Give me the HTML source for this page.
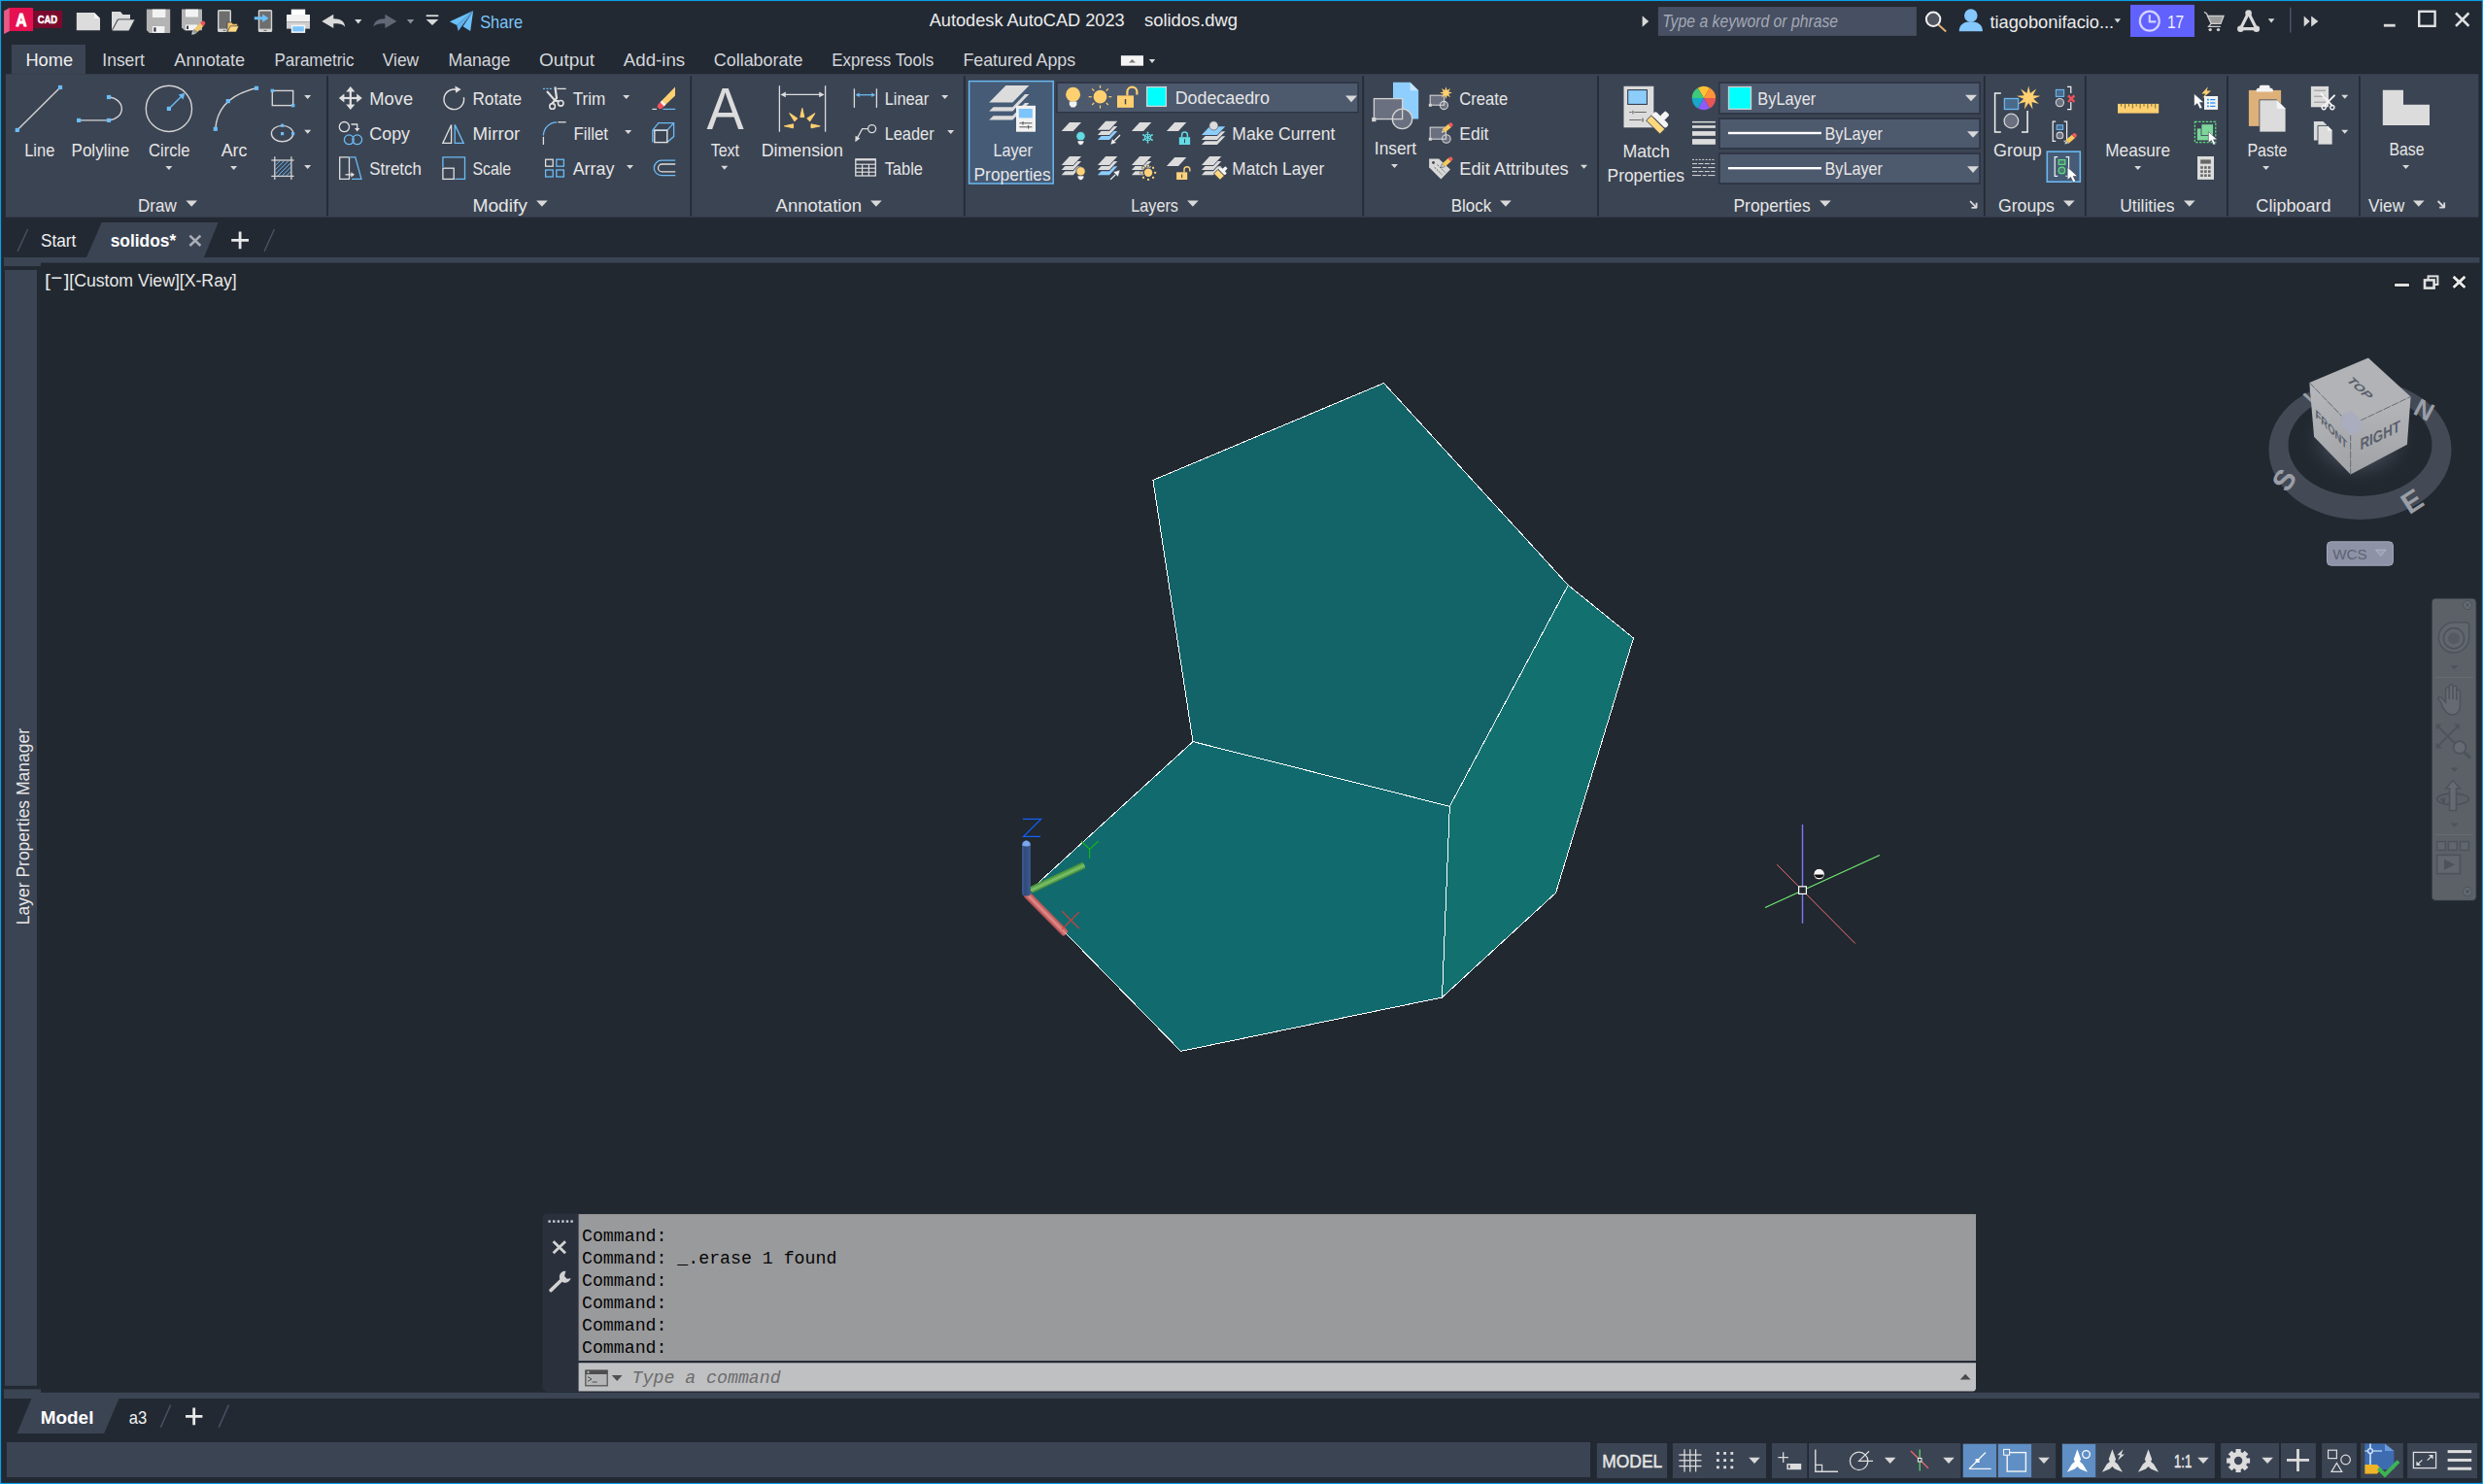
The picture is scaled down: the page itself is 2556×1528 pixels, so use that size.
<!DOCTYPE html>
<html lang="en"><head><meta charset="utf-8"><title>Autodesk AutoCAD 2023 - solidos.dwg</title>
<style>
html,body{margin:0;padding:0;background:#222933;overflow:hidden}
body{width:2556px;height:1528px;font-family:"Liberation Sans",sans-serif}
svg{display:block;font-family:"Liberation Sans",sans-serif}
</style></head><body>
<svg width="2556" height="1528" viewBox="0 0 2556 1528">
<rect x="0" y="0" width="2556" height="1528" fill="#08a0e8"/>
<rect x="1.15" y="1.1" width="2553.7" height="1525.75" fill="#282329"/>
<rect x="2.1" y="2.1" width="2551.8" height="1523.8" fill="#222933"/>
<rect x="5.8" y="76.2" width="2545.6" height="147.5" fill="#3b4453"/>
<g id="titlebar"><path d="M4.06 11.3L9.9 8.1V31.9L4.06 35.05z" fill="#e85a85"/>
<rect x="9.86" y="7.95" width="24.21" height="24.05" fill="#e61050"/>
<rect x="34.07" y="11" width="30.01" height="17.8" fill="#7a0a2c"/>
<text x="16.3" y="26.7" font-size="18.8" fill="#ffffff" textLength="11.3" lengthAdjust="spacingAndGlyphs" font-weight="bold" stroke="#ffffff" stroke-width="0.8" stroke-linejoin="round">A</text>
<text x="38.7" y="23.8" font-size="10.5" fill="#ffffff" textLength="20.45" lengthAdjust="spacingAndGlyphs" font-weight="bold" stroke="#ffffff" stroke-width="0.45" stroke-linejoin="round">CAD</text>
<path d="M78.8 12.9H97l6 6V31.2H78.8z" fill="#dcdcdc"/>
<path d="M97 12.9l6 6h-6z" fill="#f4f4f4"/>
<path d="M115 31.9V12H124l2.5 3H134v5h-13z" fill="#dcdcdc"/>
<path d="M115 31.9l6.5-12H139l-6.3 12z" fill="#dcdcdc" stroke="#222933" stroke-width="0.8"/>
<path d="M150.9 9.6h24.3v24.3h-21.3l-3-3z" fill="#b4b4b4"/><rect x="156.9" y="9.6" width="13.5" height="8.4" fill="#f2f2f2"/><rect x="156.9" y="27" width="12.5" height="6.9" fill="#f2f2f2"/><rect x="158.4" y="28.3" width="2.1" height="4.3" fill="#2a2f3a"/>
<path d="M187 9.6h21v21.6h-18l-3-3z" fill="#b4b4b4"/><rect x="191" y="9.6" width="13" height="7.9" fill="#f2f2f2"/><rect x="191" y="25.4" width="12" height="5.8" fill="#f2f2f2"/><rect x="192.2" y="26.6" width="1.8" height="3.4" fill="#2a2f3a"/><g transform="translate(199.6 33.4) rotate(-45)"><rect x="0" y="-2.3" width="3" height="4.6" fill="#9a9a9a"/><path d="M0 -2.3L-3.4 0L0 2.3z" fill="#c8c8c8"/><rect x="3" y="-2.3" width="8.5" height="4.6" fill="#f2c66d"/><path d="M11.5 -2.3h1.8a2.3 2.3 0 0 1 0 4.6h-1.8z" fill="#f0525a"/></g>
<rect x="224" y="10" width="14" height="23" fill="#d4d4d4" rx="1.6"/>
<rect x="225.4" y="11.6" width="11.2" height="18" fill="#6e6e6e"/>
<rect x="229.6" y="30.9" width="2.8" height="1" fill="#6e6e6e"/>
<path d="M234 33V23h4.5l1.2 1.6H244.5V27z" fill="#f2c66d" stroke="#222933" stroke-width="0.6"/>
<path d="M234 33l3.2-6.2H246l-3 6.2z" fill="#ffd987" stroke="#222933" stroke-width="0.6"/>
<rect x="265.8" y="10" width="14.4" height="23" fill="#d4d4d4" rx="1.6"/>
<rect x="267.2" y="11.6" width="11.6" height="18" fill="#6e6e6e"/>
<rect x="271.5" y="30.9" width="3" height="1" fill="#6e6e6e"/>
<path d="M261.8 17.3h8.4v-2.8l6.4 4.3l-6.4 4.3v-2.8h-8.4z" fill="#6cc0fa"/>
<rect x="299.8" y="9.6" width="14.4" height="8.4" fill="#ffffff"/>
<rect x="295" y="15" width="24" height="7.5" fill="#f2f2f2"/>
<rect x="295" y="22.5" width="24" height="7.1" fill="#cfcfcf"/>
<rect x="299.8" y="25.6" width="14.4" height="8.3" fill="#f6f6f6"/>
<rect x="301.2" y="27.2" width="11.6" height="5.2" fill="#7cc4fa"/>
<path d="M331.3 22l12-7.2v4.4c8 0 11.6 3.4 11.9 8.6c-2.4-3-5.6-3.6-11.9-3.4v4.6z" fill="#d9d9d9"/>
<path d="M365.15 20h7.3l-3.65 4.6z" fill="#d9d9d9"/>
<path d="M408.4 22l-12-7.2v4.4c-8 0-11.6 3.4-11.9 8.6c2.4-3 5.6-3.6 11.9-3.4v4.6z" fill="#626876"/>
<path d="M418.95 20h7.3l-3.65 4.6z" fill="#8a8f99"/>
<rect x="438.7" y="15.3" width="12.6" height="1.8" fill="#d9d9d9"/>
<path d="M438.7 20H451.3L445 25.9z" fill="#d9d9d9"/>
<path d="M462.9 22.2L487.2 10.9L470.3 25.9z" fill="#6cc0fa"/>
<path d="M470.3 25.9L487.2 10.9L471.7 31.9z" fill="#5fb2ee"/>
<path d="M476.6 27.3L487.2 10.9L484.2 31.9z" fill="#6cc0fa"/>
<text x="494.15" y="28.6" font-size="18.6" fill="#7cc4f8" textLength="43.9" lengthAdjust="spacingAndGlyphs">Share</text>
<text x="956.75" y="27.3" font-size="18.6" fill="#ececec" textLength="200.9" lengthAdjust="spacingAndGlyphs">Autodesk AutoCAD 2023</text>
<text x="1178.05" y="27.3" font-size="18.6" fill="#ececec" textLength="96" lengthAdjust="spacingAndGlyphs">solidos.dwg</text>
<path d="M1690.6 16.3L1697.2 22L1690.6 27.8z" fill="#d9d9d9"/>
<rect x="1706.9" y="7.1" width="266" height="29.8" fill="#474f62"/>
<text x="1711.15" y="27.8" font-size="17.6" fill="#a3a9b5" textLength="181" lengthAdjust="spacingAndGlyphs" font-style="italic">Type a keyword or phrase</text>
<line x1="1995" y1="25" x2="2003.2" y2="32.6" stroke="#e0b070" stroke-width="2"/>
<circle cx="1990.1" cy="19.8" r="7.2" fill="#50555f" stroke="#f2f2f2" stroke-width="2"/>
<circle cx="2028.8" cy="16" r="6.8" fill="#84c8ff"/>
<path d="M2016.7 32.2c0-7 5-10 12.1-10s12.1 3 12.1 10z" fill="#84c8ff"/>
<text x="2048.45" y="28.7" font-size="18.6" fill="#ececec" textLength="127.7" lengthAdjust="spacingAndGlyphs">tiagobonifacio...</text>
<path d="M2176.5 19.2h6.6l-3.3 4.2z" fill="#d9d9d9"/>
<rect x="2193" y="4.9" width="66" height="33.1" fill="#6161fd"/>
<circle cx="2212.8" cy="21.7" r="10" fill="none" stroke="#d2d2ff" stroke-width="2.2"/>
<path d="M2212.8 15.2V22.4H2219.4" fill="none" stroke="#d2d2ff" stroke-width="2.2"/>
<text x="2230.95" y="28.5" font-size="18.6" fill="#f0f0ff" textLength="17.3" lengthAdjust="spacingAndGlyphs">17</text>
<path d="M2269 12.4Q2272 13.4 2273 16.8" fill="none" stroke="#cfcfcf" stroke-width="1.2"/>
<path d="M2272.4 16.4H2289L2286 24.4H2276.2z" fill="#9a9a9a" stroke="#cfcfcf" stroke-width="1.3"/>
<path d="M2276.2 24.4L2273.6 27.3H2285.8" fill="none" stroke="#cfcfcf" stroke-width="1.3"/>
<circle cx="2275.2" cy="30.6" r="1.7" fill="#cfcfcf"/><circle cx="2283.5" cy="30.6" r="1.7" fill="#cfcfcf"/>
<path d="M2306.4 29.6L2314.6 13.2L2322.8 29.6z" fill="none" stroke="#d9d9d9" stroke-width="3.2" stroke-linejoin="round"/>
<circle cx="2306.4" cy="29.8" r="3.3" fill="#d9d9d9"/><circle cx="2322.8" cy="29.8" r="3.3" fill="#d9d9d9"/><circle cx="2314.6" cy="13.6" r="3.3" fill="#d9d9d9"/>
<path d="M2334.8 19.2h6.6l-3.3 4.2z" fill="#d9d9d9"/>
<line x1="2357.8" y1="7.8" x2="2357.8" y2="33.6" stroke="#4a5365" stroke-width="1.6"/>
<path d="M2371.7 16.6l6 5.4l-6 5.4zM2379.2 16.6l7.2 5.4l-7.2 5.4z" fill="#d9d9d9"/>
<rect x="2453.9" y="24.8" width="11.8" height="2.8" fill="#d9d9d9"/>
<rect x="2490.2" y="11.8" width="16.4" height="15" fill="none" stroke="#e0e0e0" stroke-width="2.4"/>
<path d="M2528 13.4L2541.4 26.8M2541.4 13.4L2528 26.8" fill="none" stroke="#e0e0e0" stroke-width="2.6"/></g>
<g id="ribbon-tabs"><rect x="11.8" y="46" width="76.2" height="30.2" fill="#3b4453"/>
<text x="26.45" y="67.6" font-size="18.6" fill="#f0f0f0" textLength="48.6" lengthAdjust="spacingAndGlyphs">Home</text>
<text x="105.35" y="67.6" font-size="18.6" fill="#d4d6da" textLength="43.6" lengthAdjust="spacingAndGlyphs">Insert</text>
<text x="179.25" y="67.6" font-size="18.6" fill="#d4d6da" textLength="72.9" lengthAdjust="spacingAndGlyphs">Annotate</text>
<text x="282.45" y="67.6" font-size="18.6" fill="#d4d6da" textLength="82.2" lengthAdjust="spacingAndGlyphs">Parametric</text>
<text x="393.75" y="67.6" font-size="18.6" fill="#d4d6da" textLength="37.4" lengthAdjust="spacingAndGlyphs">View</text>
<text x="461.45" y="67.6" font-size="18.6" fill="#d4d6da" textLength="63.9" lengthAdjust="spacingAndGlyphs">Manage</text>
<text x="555.05" y="67.6" font-size="18.6" fill="#d4d6da" textLength="57.1" lengthAdjust="spacingAndGlyphs">Output</text>
<text x="641.85" y="67.6" font-size="18.6" fill="#d4d6da" textLength="63.3" lengthAdjust="spacingAndGlyphs">Add-ins</text>
<text x="734.85" y="67.6" font-size="18.6" fill="#d4d6da" textLength="91.5" lengthAdjust="spacingAndGlyphs">Collaborate</text>
<text x="856.15" y="67.6" font-size="18.6" fill="#d4d6da" textLength="105" lengthAdjust="spacingAndGlyphs">Express Tools</text>
<text x="991.45" y="67.6" font-size="18.6" fill="#d4d6da" textLength="115.7" lengthAdjust="spacingAndGlyphs">Featured Apps</text>
<rect x="1153.9" y="57.2" width="23.1" height="10.5" fill="#f4f4f4"/>
<path d="M1162 64.6h7l-3.5-3.6z" fill="#7a7a7a"/>
<path d="M1182.8 61.1h6.4l-3.2 3.8z" fill="#d9d9d9"/></g>
<g id="ribbon"><rect x="336.1" y="78" width="1.8" height="144.6" fill="#252b36"/>
<rect x="710.3" y="78" width="1.8" height="144.6" fill="#252b36"/>
<rect x="991.9" y="78" width="1.8" height="144.6" fill="#252b36"/>
<rect x="1402.3" y="78" width="1.8" height="144.6" fill="#252b36"/>
<rect x="1644.1" y="78" width="1.8" height="144.6" fill="#252b36"/>
<rect x="2041.9" y="78" width="1.8" height="144.6" fill="#252b36"/>
<rect x="2145.9" y="78" width="1.8" height="144.6" fill="#252b36"/>
<rect x="2292.1" y="78" width="1.8" height="144.6" fill="#252b36"/>
<rect x="2428" y="78" width="1.8" height="144.6" fill="#252b36"/><text x="142.05" y="217.8" font-size="18.6" fill="#e6e6e6" textLength="39.7" lengthAdjust="spacingAndGlyphs">Draw</text>
<path d="M191.4 206.6h11.6l-5.8 6.2z" fill="#d9d9d9"/>
<text x="486.45" y="217.8" font-size="18.6" fill="#e6e6e6" textLength="56.5" lengthAdjust="spacingAndGlyphs">Modify</text>
<path d="M552.1 206.6h11.6l-5.8 6.2z" fill="#d9d9d9"/>
<text x="798.55" y="217.8" font-size="18.6" fill="#e6e6e6" textLength="88.4" lengthAdjust="spacingAndGlyphs">Annotation</text>
<path d="M896.1 206.6h11.6l-5.8 6.2z" fill="#d9d9d9"/>
<text x="1164.35" y="217.8" font-size="18.6" fill="#e6e6e6" textLength="48.5" lengthAdjust="spacingAndGlyphs">Layers</text>
<path d="M1222.1 206.6h11.6l-5.8 6.2z" fill="#d9d9d9"/>
<text x="1493.65" y="217.8" font-size="18.6" fill="#e6e6e6" textLength="41.5" lengthAdjust="spacingAndGlyphs">Block</text>
<path d="M1544.2 206.6h11.6l-5.8 6.2z" fill="#d9d9d9"/>
<text x="1784.55" y="217.8" font-size="18.6" fill="#e6e6e6" textLength="79.1" lengthAdjust="spacingAndGlyphs">Properties</text>
<path d="M1873.1 206.6h11.6l-5.8 6.2z" fill="#d9d9d9"/>
<text x="2056.95" y="217.8" font-size="18.6" fill="#e6e6e6" textLength="58" lengthAdjust="spacingAndGlyphs">Groups</text>
<path d="M2124 206.6h11.6l-5.8 6.2z" fill="#d9d9d9"/>
<text x="2182.25" y="217.8" font-size="18.6" fill="#e6e6e6" textLength="56.2" lengthAdjust="spacingAndGlyphs">Utilities</text>
<path d="M2248 206.6h11.6l-5.8 6.2z" fill="#d9d9d9"/>
<text x="2322.35" y="217.8" font-size="18.6" fill="#e6e6e6" textLength="77.3" lengthAdjust="spacingAndGlyphs">Clipboard</text>
<text x="2438.05" y="217.8" font-size="18.6" fill="#e6e6e6" textLength="37.1" lengthAdjust="spacingAndGlyphs">View</text>
<path d="M2484 206.6h11.6l-5.8 6.2z" fill="#d9d9d9"/>
<path d="M2028 207.2l6 6M2034.6 214.1v-5.4M2034.9 213.8h-5.4" fill="none" stroke="#d9d9d9" stroke-width="1.8"/>
<path d="M2509.6 207l6 6M2516.2 213.9v-5.4M2516.5 213.6h-5.4" fill="none" stroke="#d9d9d9" stroke-width="1.8"/><line x1="17.8" y1="133.9" x2="62" y2="90" stroke="#d4d4d4" stroke-width="1.4"/>
<rect x="15.7" y="131.8" width="4.2" height="4.2" fill="#6bbcf5"/><rect x="59.9" y="87.9" width="4.2" height="4.2" fill="#6bbcf5"/>
<text x="25.25" y="160.8" font-size="18.6" fill="#e6e6e6" textLength="31" lengthAdjust="spacingAndGlyphs">Line</text>
<path d="M81.1 123.9H112A14.7 12 0 0 0 112 100" fill="none" stroke="#d4d4d4" stroke-width="1.4"/>
<rect x="79" y="121.8" width="4.2" height="4.2" fill="#6bbcf5"/><rect x="109.9" y="121.8" width="4.2" height="4.2" fill="#6bbcf5"/><rect x="109.9" y="97.9" width="4.2" height="4.2" fill="#6bbcf5"/>
<text x="73.55" y="160.8" font-size="18.6" fill="#e6e6e6" textLength="59.6" lengthAdjust="spacingAndGlyphs">Polyline</text>
<circle cx="173.9" cy="111.9" r="23.6" fill="none" stroke="#d4d4d4" stroke-width="1.4"/>
<line x1="173.9" y1="111.9" x2="187.5" y2="98.5" stroke="#6bbcf5" stroke-width="1.4"/>
<path d="M190.2 95.8L188.6 102.4L183.7 97.4z" fill="#6bbcf5"/>
<rect x="171.8" y="109.8" width="4.2" height="4.2" fill="#6bbcf5"/>
<text x="153.05" y="160.8" font-size="18.6" fill="#e6e6e6" textLength="42.4" lengthAdjust="spacingAndGlyphs">Circle</text>
<path d="M170.4 170.9h7l-3.5 4z" fill="#d9d9d9"/>
<path d="M221.8 132.8Q224 100 264 90.8" fill="none" stroke="#d4d4d4" stroke-width="1.4"/>
<rect x="219.7" y="130.7" width="4.2" height="4.2" fill="#6bbcf5"/><rect x="232.7" y="102" width="4.2" height="4.2" fill="#6bbcf5"/><rect x="261.9" y="88.7" width="4.2" height="4.2" fill="#6bbcf5"/>
<text x="227.65" y="160.8" font-size="18.6" fill="#e6e6e6" textLength="26.7" lengthAdjust="spacingAndGlyphs">Arc</text>
<path d="M237.1 170.9h7l-3.5 4z" fill="#d9d9d9"/>
<rect x="280.3" y="93.4" width="21.4" height="15.2" fill="none" stroke="#d4d4d4" stroke-width="1.4"/>
<rect x="278.6" y="91.7" width="3.4" height="3.4" fill="#6bbcf5"/><rect x="300" y="106.9" width="3.4" height="3.4" fill="#6bbcf5"/>
<path d="M313.2 98h7l-3.5 4z" fill="#d9d9d9"/>
<ellipse cx="290.6" cy="137.6" rx="11.2" ry="8.2" fill="none" stroke="#d4d4d4" stroke-width="1.4"/>
<rect x="289" y="127.6" width="3.2" height="3.2" fill="#6bbcf5"/><rect x="289" y="136" width="3.2" height="3.2" fill="#6bbcf5"/><rect x="300" y="136" width="3.2" height="3.2" fill="#6bbcf5"/>
<path d="M313.2 133.8h7l-3.5 4z" fill="#d9d9d9"/>
<clipPath id="hc"><rect x="283.5" y="165.7" width="15.7" height="15"/></clipPath>
<g clip-path="url(#hc)"><line x1="267.4" y1="182" x2="284.4" y2="165" stroke="#6bbcf5" stroke-width="1"/><line x1="271.8" y1="182" x2="288.8" y2="165" stroke="#6bbcf5" stroke-width="1"/><line x1="276.2" y1="182" x2="293.2" y2="165" stroke="#6bbcf5" stroke-width="1"/><line x1="280.6" y1="182" x2="297.6" y2="165" stroke="#6bbcf5" stroke-width="1"/><line x1="285" y1="182" x2="302" y2="165" stroke="#6bbcf5" stroke-width="1"/><line x1="289.4" y1="182" x2="306.4" y2="165" stroke="#6bbcf5" stroke-width="1"/><line x1="293.8" y1="182" x2="310.8" y2="165" stroke="#6bbcf5" stroke-width="1"/><line x1="298.2" y1="182" x2="315.2" y2="165" stroke="#6bbcf5" stroke-width="1"/><line x1="302.6" y1="182" x2="319.6" y2="165" stroke="#6bbcf5" stroke-width="1"/><line x1="307" y1="182" x2="324" y2="165" stroke="#6bbcf5" stroke-width="1"/><line x1="311.4" y1="182" x2="328.4" y2="165" stroke="#6bbcf5" stroke-width="1"/></g>
<line x1="279.3" y1="165" x2="302.6" y2="165" stroke="#d4d4d4" stroke-width="1.3"/><line x1="279.3" y1="181.4" x2="302.6" y2="181.4" stroke="#d4d4d4" stroke-width="1.3"/><line x1="282.8" y1="161.2" x2="282.8" y2="184.9" stroke="#d4d4d4" stroke-width="1.3"/><line x1="299.9" y1="161.2" x2="299.9" y2="184.9" stroke="#d4d4d4" stroke-width="1.3"/>
<path d="M313.2 169.9h7l-3.5 4z" fill="#d9d9d9"/><line x1="352.8" y1="101" x2="368.8" y2="101" stroke="#e0e0e0" stroke-width="2.2"/><line x1="360.8" y1="93" x2="360.8" y2="109" stroke="#e0e0e0" stroke-width="2.2"/>
<path d="M360.8 89l-4.6 5.6h9.2zM360.8 113l-4.6 -5.6h9.2zM348.8 101l5.6 -4.6v9.2zM372.8 101l-5.6 -4.6v9.2z" fill="#e0e0e0"/>
<text x="380.35" y="107.8" font-size="18.6" fill="#e6e6e6" textLength="44.8" lengthAdjust="spacingAndGlyphs">Move</text>
<circle cx="354.4" cy="130.6" r="5.1" fill="none" stroke="#e0e0e0" stroke-width="1.3"/>
<circle cx="359.3" cy="143.8" r="4.9" fill="none" stroke="#6bbcf5" stroke-width="1.3"/><circle cx="367.7" cy="143.8" r="4.9" fill="none" stroke="#6bbcf5" stroke-width="1.3"/>
<path d="M361.5 128H367.7V133" fill="none" stroke="#e0e0e0" stroke-width="1.3"/>
<path d="M365 132l2.7 3.6l2.7-3.6z" fill="#e0e0e0"/>
<text x="380.35" y="143.8" font-size="18.6" fill="#e6e6e6" textLength="41.7" lengthAdjust="spacingAndGlyphs">Copy</text>
<path d="M359.5 161.9H349.7V184.3H359.5V161.9" fill="none" stroke="#e0e0e0" stroke-width="1.3"/>
<path d="M359.5 161.9H365.8L372 184.3H362" fill="none" stroke="#6bbcf5" stroke-width="1.3"/>
<line x1="355.5" y1="179.8" x2="362" y2="179.8" stroke="#e0e0e0" stroke-width="1.3"/><path d="M361.4 177.2l3.6 2.6l-3.6 2.6z" fill="#e0e0e0"/>
<text x="380.35" y="180.1" font-size="18.6" fill="#e6e6e6" textLength="53.5" lengthAdjust="spacingAndGlyphs">Stretch</text>
<path d="M469.8 92.3A10.3 10.3 0 1 0 477.4 100.2" fill="none" stroke="#e0e0e0" stroke-width="1.4"/>
<path d="M468.4 88.6l6.2 3.4l-5.4 3.8z" fill="#e0e0e0"/>
<text x="486.45" y="107.8" font-size="18.6" fill="#e6e6e6" textLength="50.7" lengthAdjust="spacingAndGlyphs">Rotate</text>
<path d="M464.6 128.4V147.4H455.8z" fill="none" stroke="#e0e0e0" stroke-width="1.3"/>
<path d="M468.2 128.4V147.4H477.2z" fill="none" stroke="#6bbcf5" stroke-width="1.3"/>
<text x="486.45" y="143.8" font-size="18.6" fill="#e6e6e6" textLength="48.9" lengthAdjust="spacingAndGlyphs">Mirror</text>
<path d="M455.9 172V161.8H478.5V184.4H468.4" fill="none" stroke="#6bbcf5" stroke-width="1.3"/>
<rect x="455.9" y="173.2" width="11.3" height="11.2" fill="none" stroke="#e0e0e0" stroke-width="1.3"/>
<text x="486.45" y="180.1" font-size="18.6" fill="#e6e6e6" textLength="39.7" lengthAdjust="spacingAndGlyphs">Scale</text>
<line x1="559" y1="91.4" x2="569" y2="91.4" stroke="#6bbcf5" stroke-width="1.3" stroke-dasharray="2 1.4"/><line x1="573.5" y1="91.4" x2="582.7" y2="91.4" stroke="#e0e0e0" stroke-width="1.3"/>
<path d="M571.4 89.5L573 101L568.4 106.6M563 94L571.4 103.6L575.2 104.4" fill="none" stroke="#e0e0e0" stroke-width="2.2"/>
<circle cx="568.6" cy="109.4" r="2.8" fill="none" stroke="#e0e0e0" stroke-width="1.6"/><circle cx="577.2" cy="106.3" r="2.8" fill="none" stroke="#e0e0e0" stroke-width="1.6"/>
<text x="589.65" y="107.8" font-size="18.6" fill="#e6e6e6" textLength="33.7" lengthAdjust="spacingAndGlyphs">Trim</text><path d="M641.2 98h7l-3.5 4z" fill="#d9d9d9"/>
<path d="M573.2 125.8A14 14 0 0 0 559.4 139.6" fill="none" stroke="#6bbcf5" stroke-width="1.3"/>
<line x1="574.4" y1="125.8" x2="582.7" y2="125.8" stroke="#e0e0e0" stroke-width="1.3"/><line x1="559.4" y1="140.8" x2="559.4" y2="149" stroke="#e0e0e0" stroke-width="1.3"/>
<text x="590.45" y="143.8" font-size="18.6" fill="#e6e6e6" textLength="35.6" lengthAdjust="spacingAndGlyphs">Fillet</text><path d="M643.2 134h7l-3.5 4z" fill="#d9d9d9"/>
<rect x="561.6" y="164.2" width="7.6" height="7" fill="none" stroke="#e0e0e0" stroke-width="1.3"/><rect x="572.8" y="164.2" width="7.6" height="7" fill="none" stroke="#6bbcf5" stroke-width="1.3"/><rect x="561.6" y="175" width="7.6" height="7" fill="none" stroke="#6bbcf5" stroke-width="1.3"/><rect x="572.8" y="175" width="7.6" height="7" fill="none" stroke="#6bbcf5" stroke-width="1.3"/>
<text x="589.65" y="180.1" font-size="18.6" fill="#e6e6e6" textLength="42.8" lengthAdjust="spacingAndGlyphs">Array</text><path d="M645 170.1h7l-3.5 4z" fill="#d9d9d9"/>
<path d="M695 89.6L680.6 104.2L684.4 108.4L695 98.4z" fill="#ffd070"/>
<path d="M680.6 104.2L677.4 107.4A3 3 0 0 0 681.6 111.6L684.6 108.4z" fill="#f0525a"/>
<path d="M681.4 103.4L685.4 107.6L683.6 109.4L679.6 105.2z" fill="#f4f4f4"/>
<line x1="671.4" y1="112.4" x2="676" y2="112.4" stroke="#e0e0e0" stroke-width="1.2"/><line x1="682.5" y1="112.4" x2="695.2" y2="112.4" stroke="#6bbcf5" stroke-width="1.2"/>
<path d="M671.8 134.2L677.8 126.6H693.6L693.6 140.6L686.8 146.6" fill="none" stroke="#6bbcf5" stroke-width="1.3"/><path d="M693.6 126.6L686.8 134.2H671.8" fill="none" stroke="#6bbcf5" stroke-width="1.3"/>
<rect x="673.8" y="134.2" width="13" height="12.4" fill="none" stroke="#e0e0e0" stroke-width="1.4"/>
<line x1="671.8" y1="134.2" x2="671.8" y2="146.6" stroke="#6bbcf5" stroke-width="1.3"/>
<path d="M695.2 165.2H681A7.7 7.7 0 0 0 681 180.6H695.2" fill="none" stroke="#6bbcf5" stroke-width="1.3"/>
<path d="M695.2 169H681.4A3.9 3.9 0 0 0 681.4 176.8H695.2" fill="none" stroke="#e0e0e0" stroke-width="1.3"/><text x="727.4" y="132.9" font-size="60.4" fill="#dcdcdc" textLength="38.2" lengthAdjust="spacingAndGlyphs">A</text>
<text x="731.65" y="160.6" font-size="18.6" fill="#e6e6e6" textLength="29.3" lengthAdjust="spacingAndGlyphs">Text</text><path d="M742.3 170.7h7l-3.5 4z" fill="#d9d9d9"/>
<line x1="802.4" y1="88.2" x2="802.4" y2="135.7" stroke="#dcdcdc" stroke-width="1.3"/><line x1="849.6" y1="88.2" x2="849.6" y2="135.7" stroke="#dcdcdc" stroke-width="1.3"/><line x1="807" y1="97.4" x2="845" y2="97.4" stroke="#dcdcdc" stroke-width="1.3"/>
<path d="M803.4 97.4l5.4-2.8v5.6zM848.6 97.4l-5.4-2.8v5.6z" fill="#dcdcdc"/>
<path d="M-2 -9.2L0 -18.4L2 -9.2z" fill="#ffd070" stroke="#ffd070" stroke-width="1" stroke-linejoin="round" transform="translate(825.8 129.8) rotate(-90)"/>
<path d="M-2 -9.2L0 -18.4L2 -9.2z" fill="#ffd070" stroke="#ffd070" stroke-width="1" stroke-linejoin="round" transform="translate(825.8 129.8) rotate(-45)"/>
<path d="M-2 -9.2L0 -18.4L2 -9.2z" fill="#ffd070" stroke="#ffd070" stroke-width="1" stroke-linejoin="round" transform="translate(825.8 129.8) rotate(0)"/>
<path d="M-2 -9.2L0 -18.4L2 -9.2z" fill="#ffd070" stroke="#ffd070" stroke-width="1" stroke-linejoin="round" transform="translate(825.8 129.8) rotate(45)"/>
<path d="M-2 -9.2L0 -18.4L2 -9.2z" fill="#ffd070" stroke="#ffd070" stroke-width="1" stroke-linejoin="round" transform="translate(825.8 129.8) rotate(90)"/>
<text x="783.65" y="160.6" font-size="18.6" fill="#e6e6e6" textLength="84.2" lengthAdjust="spacingAndGlyphs">Dimension</text>
<line x1="879.4" y1="91.3" x2="879.4" y2="110.9" stroke="#dcdcdc" stroke-width="1.3"/><line x1="902.4" y1="91.3" x2="902.4" y2="110.9" stroke="#dcdcdc" stroke-width="1.3"/><line x1="883" y1="97.7" x2="899" y2="97.7" stroke="#6bbcf5" stroke-width="1.3"/>
<path d="M880.6 97.7l4-2.2v4.4zM901.2 97.7l-4-2.2v4.4z" fill="#6bbcf5"/>
<text x="910.65" y="107.8" font-size="18.6" fill="#e6e6e6" textLength="45.5" lengthAdjust="spacingAndGlyphs">Linear</text><path d="M969.1 98h7l-3.5 4z" fill="#d9d9d9"/>
<circle cx="897.6" cy="132.6" r="4" fill="none" stroke="#dcdcdc" stroke-width="1.3"/>
<path d="M893.6 132.6H887.6L882.6 142" fill="none" stroke="#dcdcdc" stroke-width="1.3"/>
<path d="M880.3 146.2L880.6 139.8L885.4 142.4z" fill="#dcdcdc"/>
<text x="910.65" y="143.8" font-size="18.6" fill="#e6e6e6" textLength="51" lengthAdjust="spacingAndGlyphs">Leader</text><path d="M975.2 134h7l-3.5 4z" fill="#d9d9d9"/>
<rect x="880.8" y="163.8" width="20.5" height="17.2" fill="none" stroke="#dcdcdc" stroke-width="1.3"/>
<rect x="880.8" y="163.8" width="20.5" height="1.6" fill="#dcdcdc"/>
<line x1="880.8" y1="169.2" x2="901.3" y2="169.2" stroke="#dcdcdc" stroke-width="1.2"/>
<line x1="880.8" y1="173.2" x2="901.3" y2="173.2" stroke="#dcdcdc" stroke-width="1.2"/>
<line x1="880.8" y1="177.2" x2="901.3" y2="177.2" stroke="#dcdcdc" stroke-width="1.2"/>
<line x1="887.6" y1="169.2" x2="887.6" y2="181" stroke="#dcdcdc" stroke-width="1.2"/>
<line x1="894.4" y1="169.2" x2="894.4" y2="181" stroke="#dcdcdc" stroke-width="1.2"/>
<text x="910.65" y="180.1" font-size="18.6" fill="#e6e6e6" textLength="39.3" lengthAdjust="spacingAndGlyphs">Table</text><rect x="997.6" y="83.6" width="86.6" height="105.4" fill="#455b76" stroke="#6ab8f0" stroke-width="1.5"/>
<path d="M1018.2 105.6H1042.4L1059.4 88H1035.4z" fill="#dcdcdc"/>
<path d="M1018.2 114.6H1042.4L1059.4 97H1055L1042.4 110.2H1022.6z" fill="#dcdcdc"/>
<path d="M1018.2 123.6H1042.4L1059.4 106H1055L1042.4 119.2H1022.6z" fill="#dcdcdc"/>
<rect x="1046" y="108.8" width="20" height="26.9" fill="#f2f2f2"/>
<rect x="1048.8" y="112" width="14" height="9.4" fill="#7cc4fa"/>
<line x1="1049.4" y1="126.8" x2="1062.4" y2="126.8" stroke="#555" stroke-width="1"/><line x1="1049.4" y1="130.8" x2="1062.4" y2="130.8" stroke="#555" stroke-width="1"/><line x1="1053" y1="125" x2="1053" y2="128.6" stroke="#555" stroke-width="1"/><line x1="1058.6" y1="129" x2="1058.6" y2="132.6" stroke="#555" stroke-width="1"/>
<text x="1022.45" y="160.6" font-size="18.6" fill="#e6e6e6" textLength="40.5" lengthAdjust="spacingAndGlyphs">Layer</text>
<text x="1002.55" y="185.5" font-size="18.6" fill="#e6e6e6" textLength="79.1" lengthAdjust="spacingAndGlyphs">Properties</text>
<rect x="1086.9" y="84.2" width="312.1" height="32.3" fill="#2e3645"/>
<rect x="1088.7" y="86" width="308.6" height="29" fill="#4d596d"/>
<circle cx="1104.6" cy="97.3" r="7.5" fill="#ffd070"/>
<path d="M1100.8 104.4h7.6v3.6l-2 2.6h-3.6l-2-2.6z" fill="#f2f2f2"/>
<circle cx="1132.5" cy="99.7" r="6.9" fill="#ffd070"/>
<line x1="1141.3" y1="99.7" x2="1144.3" y2="99.7" stroke="#ffd070" stroke-width="1.2"/>
<line x1="1138.72" y1="105.92" x2="1140.84" y2="108.04" stroke="#ffd070" stroke-width="1.2"/>
<line x1="1132.5" y1="108.5" x2="1132.5" y2="111.5" stroke="#ffd070" stroke-width="1.2"/>
<line x1="1126.28" y1="105.92" x2="1124.16" y2="108.04" stroke="#ffd070" stroke-width="1.2"/>
<line x1="1123.7" y1="99.7" x2="1120.7" y2="99.7" stroke="#ffd070" stroke-width="1.2"/>
<line x1="1126.28" y1="93.48" x2="1124.16" y2="91.36" stroke="#ffd070" stroke-width="1.2"/>
<line x1="1132.5" y1="90.9" x2="1132.5" y2="87.9" stroke="#ffd070" stroke-width="1.2"/>
<line x1="1138.72" y1="93.48" x2="1140.84" y2="91.36" stroke="#ffd070" stroke-width="1.2"/>
<rect x="1150" y="98.4" width="17" height="12.4" fill="#ffd070"/>
<path d="M1160.4 98.4V94.6A5 5 0 0 1 1170.4 94.6V97.6" fill="none" stroke="#ffd070" stroke-width="2.2"/>
<rect x="1157.8" y="102" width="1.4" height="5.4" fill="#3b4453"/>
<rect x="1180.6" y="89.6" width="19.8" height="19.8" fill="#00ffff" stroke="#d4d4d4" stroke-width="1.3"/>
<text x="1209.65" y="107.3" font-size="18.9" fill="#e6e6e6" textLength="97.3" lengthAdjust="spacingAndGlyphs">Dodecaedro</text>
<path d="M1385 98.6h12l-6 6.6z" fill="#d9d9d9"/>
<path d="M1092.7 135.1h12.1l8.3 -9h-12.1z" fill="#dcdcdc"/><circle cx="1112.5" cy="140.2" r="4.7" fill="#62dbe2" stroke="#3b4453" stroke-width="0.8"/><path d="M1109.3 144.9h6.4v1.6l-1.6 2.4q-1.6 0.8 -3.2 0l-1.6-2.4z" fill="#f4f4f4" stroke="#3b4453" stroke-width="0.5"/>
<path d="M1129.9 143.96h12.1l8.3 -9h-12.1z" fill="#3b4453" transform="translate(0 1.1)"/><path d="M1129.9 143.96h12.1l8.3 -9h-12.1z" fill="#8ccdfa"/><path d="M1129.9 138.88h12.1l8.3 -9h-12.1z" fill="#3b4453" transform="translate(0 1.1)"/><path d="M1129.9 138.88h12.1l8.3 -9h-12.1z" fill="#dcdcdc"/><path d="M1129.9 133.8h12.1l8.3 -9h-12.1z" fill="#3b4453" transform="translate(0 1.1)"/><path d="M1129.9 133.8h12.1l8.3 -9h-12.1z" fill="#dcdcdc"/>
<line x1="1153" y1="139" x2="1147.06" y2="144.94" stroke="#f4f4f4" stroke-width="1.3"/><path d="M1143.1 148.9L1144.88 142.76L1149.24 147.12z" fill="#f4f4f4" stroke="#3b4453" stroke-width="0.5"/>
<path d="M1164.9 135.1h12.1l8.3 -9h-12.1z" fill="#dcdcdc"/>
<line x1="1181.5" y1="136.1" x2="1181.5" y2="146.9" stroke="#62dbe2" stroke-width="1.1"/>
<line x1="1186.18" y1="138.8" x2="1176.82" y2="144.2" stroke="#62dbe2" stroke-width="1.1"/>
<line x1="1186.18" y1="144.2" x2="1176.82" y2="138.8" stroke="#62dbe2" stroke-width="1.1"/>
<circle cx="1181.5" cy="141.5" r="3.2" fill="none" stroke="#62dbe2" stroke-width="1.1"/>
<circle cx="1181.5" cy="146.7" r="0.9" fill="#62dbe2"/>
<circle cx="1177" cy="144.1" r="0.9" fill="#62dbe2"/>
<circle cx="1177" cy="138.9" r="0.9" fill="#62dbe2"/>
<circle cx="1181.5" cy="136.3" r="0.9" fill="#62dbe2"/>
<circle cx="1186" cy="138.9" r="0.9" fill="#62dbe2"/>
<circle cx="1186" cy="144.1" r="0.9" fill="#62dbe2"/>
<path d="M1200.9 135.1h12.1l8.3 -9h-12.1z" fill="#dcdcdc"/>
<rect x="1213.8" y="141.2" width="11.3" height="7.8" fill="#62dbe2"/><path d="M1216.6 141.2V139A2.9 2.9 0 0 1 1222.4 139V141.2" fill="none" stroke="#62dbe2" stroke-width="1.5"/><rect x="1219" y="143.2" width="1" height="4" fill="#3b4453"/>
<path d="M1236.9 149.1h16l8.4 -8.8h-16z" fill="#3b4453" transform="translate(0 1.1)"/><path d="M1236.9 149.1h16l8.4 -8.8h-16z" fill="#dcdcdc"/><path d="M1236.9 144.1h16l8.4 -8.8h-16z" fill="#3b4453" transform="translate(0 1.1)"/><path d="M1236.9 144.1h16l8.4 -8.8h-16z" fill="#dcdcdc"/><path d="M1236.9 139h16l8.4 -8.8h-16z" fill="#3b4453" transform="translate(0 1.1)"/><path d="M1236.9 139h16l8.4 -8.8h-16z" fill="#8ccdfa"/>
<circle cx="1249.4" cy="129.4" r="4.6" fill="#dcdcdc" stroke="#3b4453" stroke-width="0.6"/>
<text x="1268.35" y="143.8" font-size="18.6" fill="#e6e6e6" textLength="106" lengthAdjust="spacingAndGlyphs">Make Current</text>
<path d="M1092.7 180.16h12.1l8.3 -9h-12.1z" fill="#3b4453" transform="translate(0 1.1)"/><path d="M1092.7 180.16h12.1l8.3 -9h-12.1z" fill="#dcdcdc"/><path d="M1092.7 175.08h12.1l8.3 -9h-12.1z" fill="#3b4453" transform="translate(0 1.1)"/><path d="M1092.7 175.08h12.1l8.3 -9h-12.1z" fill="#dcdcdc"/><path d="M1092.7 170h12.1l8.3 -9h-12.1z" fill="#3b4453" transform="translate(0 1.1)"/><path d="M1092.7 170h12.1l8.3 -9h-12.1z" fill="#dcdcdc"/><circle cx="1112.5" cy="176.4" r="4.7" fill="#ffd27a" stroke="#3b4453" stroke-width="0.8"/><path d="M1109.3 181.1h6.4v1.6l-1.6 2.4q-1.6 0.8 -3.2 0l-1.6-2.4z" fill="#f4f4f4" stroke="#3b4453" stroke-width="0.5"/>
<path d="M1129.9 180.16h12.1l8.3 -9h-12.1z" fill="#3b4453" transform="translate(0 1.1)"/><path d="M1129.9 180.16h12.1l8.3 -9h-12.1z" fill="#8ccdfa"/><path d="M1129.9 175.08h12.1l8.3 -9h-12.1z" fill="#3b4453" transform="translate(0 1.1)"/><path d="M1129.9 175.08h12.1l8.3 -9h-12.1z" fill="#dcdcdc"/><path d="M1129.9 170h12.1l8.3 -9h-12.1z" fill="#3b4453" transform="translate(0 1.1)"/><path d="M1129.9 170h12.1l8.3 -9h-12.1z" fill="#dcdcdc"/>
<line x1="1143.1" y1="184.9" x2="1148.45" y2="179.6" stroke="#f4f4f4" stroke-width="1.3"/><path d="M1153 175.1L1150.93 182.1L1145.98 177.1z" fill="#f4f4f4" stroke="#3b4453" stroke-width="0.5"/>
<path d="M1164.9 180.16h12.1l8.3 -9h-12.1z" fill="#3b4453" transform="translate(0 1.1)"/><path d="M1164.9 180.16h12.1l8.3 -9h-12.1z" fill="#dcdcdc"/><path d="M1164.9 175.08h12.1l8.3 -9h-12.1z" fill="#3b4453" transform="translate(0 1.1)"/><path d="M1164.9 175.08h12.1l8.3 -9h-12.1z" fill="#dcdcdc"/><path d="M1164.9 170h12.1l8.3 -9h-12.1z" fill="#3b4453" transform="translate(0 1.1)"/><path d="M1164.9 170h12.1l8.3 -9h-12.1z" fill="#dcdcdc"/>
<circle cx="1182.05" cy="177.8" r="5.2" fill="#3b4453"/><circle cx="1182.05" cy="177.8" r="4.2" fill="#ffd27a"/>
<rect x="1187.65" y="176.3" width="3" height="3" fill="#3b4453"/><rect x="1188.15" y="176.8" width="2" height="2" fill="#ffd27a"/>
<rect x="1185.57" y="181.32" width="3" height="3" fill="#3b4453"/><rect x="1186.07" y="181.82" width="2" height="2" fill="#ffd27a"/>
<rect x="1180.55" y="183.4" width="3" height="3" fill="#3b4453"/><rect x="1181.05" y="183.9" width="2" height="2" fill="#ffd27a"/>
<rect x="1175.53" y="181.32" width="3" height="3" fill="#3b4453"/><rect x="1176.03" y="181.82" width="2" height="2" fill="#ffd27a"/>
<rect x="1173.45" y="176.3" width="3" height="3" fill="#3b4453"/><rect x="1173.95" y="176.8" width="2" height="2" fill="#ffd27a"/>
<rect x="1175.53" y="171.28" width="3" height="3" fill="#3b4453"/><rect x="1176.03" y="171.78" width="2" height="2" fill="#ffd27a"/>
<rect x="1180.55" y="169.2" width="3" height="3" fill="#3b4453"/><rect x="1181.05" y="169.7" width="2" height="2" fill="#ffd27a"/>
<rect x="1185.57" y="171.28" width="3" height="3" fill="#3b4453"/><rect x="1186.07" y="171.78" width="2" height="2" fill="#ffd27a"/>
<path d="M1200.9 171.1h12.1l8.3 -9h-12.1z" fill="#dcdcdc"/>
<rect x="1211.1" y="177.3" width="11.1" height="7.7" fill="#ffd27a"/><path d="M1219 177.3V174.6A2.9 2.9 0 0 1 1224.8 174.6V176.6" fill="none" stroke="#ffd27a" stroke-width="1.4"/><rect x="1216.2" y="179.4" width="1" height="3.8" fill="#3b4453"/>
<path d="M1236.9 180.16h12.1l8.3 -9h-12.1z" fill="#3b4453" transform="translate(0 1.1)"/><path d="M1236.9 180.16h12.1l8.3 -9h-12.1z" fill="#dcdcdc"/><path d="M1236.9 175.08h12.1l8.3 -9h-12.1z" fill="#3b4453" transform="translate(0 1.1)"/><path d="M1236.9 175.08h12.1l8.3 -9h-12.1z" fill="#dcdcdc"/><path d="M1236.9 170h12.1l8.3 -9h-12.1z" fill="#3b4453" transform="translate(0 1.1)"/><path d="M1236.9 170h12.1l8.3 -9h-12.1z" fill="#dcdcdc"/>
<g transform="translate(1254.9 179.9) rotate(-45)"><rect x="-3.1" y="-4.6" width="6.2" height="9.2" fill="#ffd87e" stroke="#3b4453" stroke-width="0.8"/><rect x="6.4" y="-1.7" width="4.4" height="3.4" fill="#f4f4f4" rx="0.8"/><rect x="3.7" y="-4.6" width="3.2" height="9.2" fill="#f4f4f4" rx="1.2"/></g>
<text x="1268.35" y="179.7" font-size="18.6" fill="#e6e6e6" textLength="94.8" lengthAdjust="spacingAndGlyphs">Match Layer</text><path d="M1434 84.7H1451.6L1460.2 93.3V122.4H1434z" fill="#8ecfff"/>
<path d="M1451.6 84.7L1460.2 93.3H1451.6z" fill="#c4e6ff"/>
<rect x="1414.4" y="101.6" width="29.2" height="21" fill="#6b7080"/>
<circle cx="1443.5" cy="122.4" r="10.2" fill="#6b7080"/>
<rect x="1414.4" y="101.6" width="29.2" height="21" fill="none" stroke="#d4d4d4" stroke-width="1.3"/>
<circle cx="1443.5" cy="122.4" r="10.2" fill="none" stroke="#d4d4d4" stroke-width="1.3"/>
<rect x="1412.2" y="121" width="4.2" height="4.2" fill="#d4d4d4"/>
<text x="1414.85" y="158.9" font-size="18.6" fill="#e6e6e6" textLength="43.2" lengthAdjust="spacingAndGlyphs">Insert</text><path d="M1432 169h7l-3.5 4z" fill="#d9d9d9"/>
<rect x="1472.2" y="98.2" width="14.5" height="10" fill="#6b7080"/><circle cx="1486.4" cy="108.5" r="4.1" fill="#6b7080"/><rect x="1472.2" y="98.2" width="14.5" height="10" fill="none" stroke="#d4d4d4" stroke-width="1.1"/><circle cx="1486.4" cy="108.5" r="4.1" fill="none" stroke="#d4d4d4" stroke-width="1.1"/><rect x="1470.8" y="106.8" width="3" height="3" fill="#d4d4d4"/>
<polygon points="1488.5 89.2 1489.61 92.92 1493.03 91.07 1491.18 94.49 1494.9 95.6 1491.18 96.71 1493.03 100.13 1489.61 98.28 1488.5 102 1487.39 98.28 1483.97 100.13 1485.82 96.71 1482.1 95.6 1485.82 94.49 1483.97 91.07 1487.39 92.92" fill="#ffd070"/>
<text x="1502.35" y="107.6" font-size="18.6" fill="#e6e6e6" textLength="49.8" lengthAdjust="spacingAndGlyphs">Create</text>
<rect x="1472.2" y="131.1" width="16.3" height="12.1" fill="#6b7080"/><circle cx="1488.9" cy="143" r="4.3" fill="#6b7080"/><rect x="1472.2" y="131.1" width="16.3" height="12.1" fill="none" stroke="#d4d4d4" stroke-width="1.1"/><circle cx="1488.9" cy="143" r="4.3" fill="none" stroke="#d4d4d4" stroke-width="1.1"/><rect x="1470.8" y="141.8" width="3" height="3" fill="#d4d4d4"/>
<g transform="translate(1483 137.4) rotate(-40.2) scale(1)"><path d="M0 0L4 -2.2V2.2z" fill="#d4d4d4" stroke="#3b4453" stroke-width="0.5"/><rect x="4" y="-2.2" width="8.2" height="4.4" fill="#f5c860"/><path d="M12.2 -2.2h1.4a2.2 2.2 0 0 1 0 4.4h-1.4z" fill="#f05a5a"/></g>
<text x="1502.35" y="143.7" font-size="18.6" fill="#e6e6e6" textLength="30" lengthAdjust="spacingAndGlyphs">Edit</text>
<path d="M1471.1 163.4H1481.1L1493 174.5L1483.3 184.5L1471.1 172.3z" fill="#d8d8d8"/>
<circle cx="1475.5" cy="167.5" r="1.4" fill="#3b4453"/>
<line x1="1476.6" y1="172.2" x2="1484.6" y2="180" stroke="#555" stroke-width="0.9" stroke-dasharray="2 1.2"/><line x1="1479.6" y1="169.6" x2="1487.6" y2="177.4" stroke="#555" stroke-width="0.9" stroke-dasharray="2 1.2"/>
<g transform="translate(1483 172.7) rotate(-41) scale(1)"><path d="M0 0L4 -2.2V2.2z" fill="#d4d4d4" stroke="#3b4453" stroke-width="0.5"/><rect x="4" y="-2.2" width="8.2" height="4.4" fill="#f5c860"/><path d="M12.2 -2.2h1.4a2.2 2.2 0 0 1 0 4.4h-1.4z" fill="#f05a5a"/></g>
<text x="1502.35" y="179.7" font-size="18.6" fill="#e6e6e6" textLength="112.3" lengthAdjust="spacingAndGlyphs">Edit Attributes</text><path d="M1627 169.7h7l-3.5 4z" fill="#d9d9d9"/><rect x="1671.9" y="89.1" width="30.1" height="41.9" fill="#dcdcdc" stroke="#e8e8e8" stroke-width="0.6"/>
<rect x="1675.7" y="92.6" width="19.7" height="14.8" fill="#8ccdfa" stroke="#2a3040" stroke-width="1"/>
<line x1="1677.2" y1="115.5" x2="1694.8" y2="115.5" stroke="#6a6a6a" stroke-width="1"/><line x1="1677.2" y1="123.5" x2="1691.2" y2="123.5" stroke="#6a6a6a" stroke-width="1"/><rect x="1680" y="113.4" width="1.9" height="4.4" fill="#5a5a5a" stroke="#dcdcdc" stroke-width="0.8"/><rect x="1690" y="121.2" width="2" height="4.7" fill="#5a5a5a" stroke="#dcdcdc" stroke-width="0.8"/>
<g transform="translate(1704.2 128.5) rotate(-45)"><rect x="-3.6" y="-9.9" width="7.2" height="19.8" fill="#ffd87e" stroke="#3b4453" stroke-width="0.9"/><rect x="9.4" y="-3.1" width="8" height="6.2" fill="#f4f4f4" rx="1.6"/><rect x="4.3" y="-9.9" width="5.7" height="19.8" fill="#f4f4f4" rx="2.6"/></g>
<text x="1670.45" y="161.5" font-size="18.6" fill="#e6e6e6" textLength="48.4" lengthAdjust="spacingAndGlyphs">Match</text>
<text x="1654.55" y="186.9" font-size="18.6" fill="#e6e6e6" textLength="79.3" lengthAdjust="spacingAndGlyphs">Properties</text>
<path d="M1753.9 101L1747.8 90.43A12.2 12.2 0 0 1 1760 90.43z" fill="#ffc234"/>
<path d="M1753.9 101L1760 90.43A12.2 12.2 0 0 1 1766.1 101z" fill="#ff9438"/>
<path d="M1753.9 101L1766.1 101A12.2 12.2 0 0 1 1760 111.57z" fill="#e85656"/>
<path d="M1753.9 101L1760 111.57A12.2 12.2 0 0 1 1747.8 111.57z" fill="#8b5cf6"/>
<path d="M1753.9 101L1747.8 111.57A12.2 12.2 0 0 1 1741.7 101z" fill="#17a7c9"/>
<path d="M1753.9 101L1741.7 101A12.2 12.2 0 0 1 1747.8 90.43z" fill="#3fc97a"/>
<rect x="1742" y="124.9" width="23.9" height="1.5" fill="#dcdcdc"/>
<rect x="1742" y="129.2" width="23.9" height="2.6" fill="#dcdcdc"/>
<rect x="1742" y="135.1" width="23.9" height="4.7" fill="#dcdcdc"/>
<rect x="1742" y="143.1" width="23.9" height="5.7" fill="#dcdcdc"/>
<line x1="1742" y1="164.4" x2="1765.4" y2="164.4" stroke="#dcdcdc" stroke-width="1" stroke-dasharray="2 1.4"/>
<line x1="1742" y1="168.6" x2="1765.4" y2="168.6" stroke="#dcdcdc" stroke-width="1" stroke-dasharray="5 1.4"/>
<line x1="1742" y1="172.6" x2="1765.4" y2="172.6" stroke="#dcdcdc" stroke-width="1" stroke-dasharray="9 1.6 4 1.6"/>
<line x1="1742" y1="176.6" x2="1765.4" y2="176.6" stroke="#dcdcdc" stroke-width="1" stroke-dasharray="5 1.4"/>
<line x1="1742" y1="180.6" x2="1765.4" y2="180.6" stroke="#dcdcdc" stroke-width="1" stroke-dasharray="9 1.6 4 1.6"/>
<rect x="1768.9" y="84.2" width="270.1" height="33.7" fill="#2e3645"/>
<rect x="1770.7" y="86" width="266.5" height="30.1" fill="#4d596d"/>
<rect x="1768.9" y="121.2" width="270.1" height="32.6" fill="#2e3645"/>
<rect x="1770.7" y="123" width="266.5" height="29" fill="#4d596d"/>
<rect x="1768.9" y="157.1" width="270.1" height="32.8" fill="#2e3645"/>
<rect x="1770.7" y="158.9" width="266.5" height="29.2" fill="#4d596d"/>
<rect x="1779.5" y="89.5" width="23" height="22.8" fill="#00ffff" stroke="#d0d0d0" stroke-width="1.3"/>
<text x="1809.35" y="107.9" font-size="19" fill="#e6e6e6" textLength="59.9" lengthAdjust="spacingAndGlyphs">ByLayer</text>
<path d="M2023 97.7h12l-6 6.6z" fill="#d9d9d9"/>
<rect x="1778.9" y="135.8" width="96" height="2.4" fill="#ffffff"/>
<text x="1878.55" y="143.8" font-size="19" fill="#e6e6e6" textLength="59.4" lengthAdjust="spacingAndGlyphs">ByLayer</text>
<path d="M2025 135.2h12l-6 6.6z" fill="#d9d9d9"/>
<rect x="1778.9" y="172" width="96" height="2.4" fill="#ffffff"/>
<text x="1878.55" y="179.7" font-size="19" fill="#e6e6e6" textLength="59.4" lengthAdjust="spacingAndGlyphs">ByLayer</text>
<path d="M2025 171.3h12l-6 6.6z" fill="#d9d9d9"/><path d="M2059.8 95.9H2053.6V135.9H2059.8" fill="none" stroke="#f2f2f2" stroke-width="1.5"/>
<path d="M2081 135.9H2087.1V114" fill="none" stroke="#f2f2f2" stroke-width="1.5"/>
<rect x="2063.4" y="101.5" width="14.2" height="11" fill="#4a6a8c" stroke="#6ab8f0" stroke-width="1.3"/>
<circle cx="2070.4" cy="124.5" r="7.3" fill="#6b7080" stroke="#d4d4d4" stroke-width="1.3"/>
<polygon points="2088.2 88.5 2089.98 96.01 2096.17 91.4 2092.7 98.3 2100.41 98.75 2093.32 101.8 2098.94 107.1 2091.54 104.88 2092.44 112.55 2088.2 106.1 2083.96 112.55 2084.86 104.88 2077.46 107.1 2083.08 101.8 2075.99 98.75 2083.7 98.3 2080.23 91.4 2086.42 96.01" fill="#ffd070"/>
<text x="2052.05" y="160.8" font-size="18.6" fill="#e6e6e6" textLength="49.8" lengthAdjust="spacingAndGlyphs">Group</text>
<rect x="2116.4" y="92.4" width="8.2" height="7" fill="#4a6a8c" stroke="#6ab8f0" stroke-width="1.1"/>
<circle cx="2120.4" cy="105.6" r="4.1" fill="#6b7080" stroke="#d4d4d4" stroke-width="1.1"/>
<path d="M2128 89.4H2131.8V96M2131.8 105V112.6H2128" fill="none" stroke="#f2f2f2" stroke-width="1.2"/>
<path d="M2129 98.4L2135.4 105M2135.4 98.4L2129 105" fill="none" stroke="#f0525a" stroke-width="2.4"/>
<path d="M2116.2 125.2H2113.2V145.4H2116.2M2124.6 125.2H2127.6V145.4H2124.6" fill="none" stroke="#f2f2f2" stroke-width="1.2"/>
<rect x="2117.2" y="128.8" width="6.4" height="4.6" fill="#4a6a8c" stroke="#6ab8f0" stroke-width="1.1"/>
<circle cx="2120.4" cy="139.4" r="3.3" fill="#6b7080" stroke="#d4d4d4" stroke-width="1.1"/>
<g transform="translate(2124.8 148.8) rotate(-41) scale(1.04)"><path d="M0 0L4 -2.2V2.2z" fill="#d4d4d4" stroke="#3b4453" stroke-width="0.5"/><rect x="4" y="-2.2" width="8.2" height="4.4" fill="#f5c860"/><path d="M12.2 -2.2h1.4a2.2 2.2 0 0 1 0 4.4h-1.4z" fill="#f05a5a"/></g>
<rect x="2107.3" y="156.1" width="34" height="31.1" fill="#455b76" stroke="#6ab8f0" stroke-width="1.6"/>
<path d="M2118.2 161.6H2115.2V181.4H2118.2M2126.6 161.6H2129.6V181.4H2126.6" fill="none" stroke="#f2f2f2" stroke-width="1.2"/>
<rect x="2119.2" y="164.6" width="6.6" height="4.8" fill="#4a7a70" stroke="#5fdc80" stroke-width="1.2"/>
<circle cx="2122.4" cy="175.4" r="3.3" fill="#4a7a70" stroke="#5fdc80" stroke-width="1.2"/>
<path transform="translate(2128.2 172) scale(1)" d="M0 0V13.2L3.4 10.4L6 16L8.6 14.8L6 9.4H10.4z" fill="#ffffff" stroke="#3b4453" stroke-width="0.6"/>
<rect x="2180" y="106.9" width="42.2" height="9.7" fill="#ffd070"/>
<line x1="2183.6" y1="106.9" x2="2183.6" y2="109.6" stroke="#7a6a3a" stroke-width="1"/>
<line x1="2187.5" y1="106.9" x2="2187.5" y2="111.6" stroke="#7a6a3a" stroke-width="1"/>
<line x1="2191.4" y1="106.9" x2="2191.4" y2="109.6" stroke="#7a6a3a" stroke-width="1"/>
<line x1="2195.3" y1="106.9" x2="2195.3" y2="111.6" stroke="#7a6a3a" stroke-width="1"/>
<line x1="2199.2" y1="106.9" x2="2199.2" y2="109.6" stroke="#7a6a3a" stroke-width="1"/>
<line x1="2203.1" y1="106.9" x2="2203.1" y2="111.6" stroke="#7a6a3a" stroke-width="1"/>
<line x1="2207" y1="106.9" x2="2207" y2="109.6" stroke="#7a6a3a" stroke-width="1"/>
<line x1="2210.9" y1="106.9" x2="2210.9" y2="111.6" stroke="#7a6a3a" stroke-width="1"/>
<line x1="2214.8" y1="106.9" x2="2214.8" y2="109.6" stroke="#7a6a3a" stroke-width="1"/>
<line x1="2218.7" y1="106.9" x2="2218.7" y2="111.6" stroke="#7a6a3a" stroke-width="1"/>
<text x="2167.35" y="160.8" font-size="18.6" fill="#e6e6e6" textLength="66.7" lengthAdjust="spacingAndGlyphs">Measure</text><path d="M2197.2 170.9h7l-3.5 4z" fill="#d9d9d9"/>
<path d="M2273 89.2L2266.4 96.4H2270.4L2267 101.4L2276 93.6H2271.6z" fill="#ffd070"/>
<rect x="2269" y="99" width="14.1" height="13.9" fill="#f2f2f2"/>
<rect x="2272" y="101.8" width="1.8" height="1.6" fill="#1a8cf0"/><rect x="2275.2" y="102" width="5.2" height="1.2" fill="#1a8cf0"/>
<rect x="2272" y="105.2" width="1.8" height="1.6" fill="#1a8cf0"/><rect x="2275.2" y="105.4" width="5.2" height="1.2" fill="#1a8cf0"/>
<rect x="2272" y="108.6" width="1.8" height="1.6" fill="#1a8cf0"/><rect x="2275.2" y="108.8" width="5.2" height="1.2" fill="#1a8cf0"/>
<path transform="translate(2258.6 96.4) scale(0.98)" d="M0 0V13.2L3.4 10.4L6 16L8.6 14.8L6 9.4H10.4z" fill="#ffffff" stroke="#3b4453" stroke-width="0.6"/>
<rect x="2259.4" y="125.3" width="21.4" height="21.3" fill="none" stroke="#5fdc80" stroke-width="1.2" stroke-dasharray="2.4 1.4"/>
<rect x="2261.8" y="132.4" width="12.2" height="12" fill="#7dd69a"/>
<rect x="2266" y="127.8" width="12.4" height="11.8" fill="#7dd69a" stroke="#3b4453" stroke-width="0.8"/>
<path transform="translate(2273.4 135.6) scale(0.86)" d="M0 0V13.2L3.4 10.4L6 16L8.6 14.8L6 9.4H10.4z" fill="#ffffff" stroke="#3b4453" stroke-width="0.6"/>
<rect x="2262" y="161" width="17" height="23.9" fill="#dcdcdc"/>
<rect x="2265.2" y="164.4" width="10.6" height="4.2" fill="#666"/>
<rect x="2265.2" y="171.2" width="2.6" height="2.6" fill="#666"/>
<rect x="2269.1" y="171.2" width="2.6" height="2.6" fill="#666"/>
<rect x="2273" y="171.2" width="2.6" height="2.6" fill="#666"/>
<rect x="2265.2" y="175.3" width="2.6" height="2.6" fill="#666"/>
<rect x="2269.1" y="175.3" width="2.6" height="2.6" fill="#666"/>
<rect x="2273" y="175.3" width="2.6" height="2.6" fill="#666"/>
<rect x="2265.2" y="179.4" width="2.6" height="2.6" fill="#666"/>
<rect x="2269.1" y="179.4" width="2.6" height="2.6" fill="#666"/>
<rect x="2273" y="179.4" width="2.6" height="2.6" fill="#666"/><rect x="2314.9" y="92.9" width="33.2" height="37" fill="#deb07a"/>
<path d="M2322.7 94.4V92.4Q2322.7 91 2326 90.6V88.6Q2326 87.8 2328 87.8H2334.5Q2336.5 87.8 2336.5 88.6V90.6Q2339.8 91 2339.8 92.4V94.4z" fill="#f4f4f4"/>
<path d="M2325.9 102.8H2343.8L2353 112V136H2325.9z" fill="#dcdcdc" stroke="#3b4453" stroke-width="0.8"/>
<path d="M2343.8 102.8L2353 112H2343.8z" fill="#f4f4f4"/>
<text x="2313.45" y="160.8" font-size="18.6" fill="#e6e6e6" textLength="40.9" lengthAdjust="spacingAndGlyphs">Paste</text><path d="M2329.1 170.9h7l-3.5 4z" fill="#d9d9d9"/>
<rect x="2378.9" y="88.9" width="18.2" height="21.4" fill="#dcdcdc"/>
<line x1="2382" y1="93.2" x2="2394" y2="93.2" stroke="#8a8a8a" stroke-width="0.9"/>
<line x1="2382" y1="99.2" x2="2394" y2="99.2" stroke="#8a8a8a" stroke-width="0.9"/>
<line x1="2382" y1="105.2" x2="2394" y2="105.2" stroke="#8a8a8a" stroke-width="0.9"/>
<path d="M2389.4 96.6L2400.6 108.6M2403 98.4L2392.8 108.6" fill="none" stroke="#f4f4f4" stroke-width="2" stroke-linecap="round"/>
<path d="M2389.4 96.6L2400.6 108.6M2403 98.4L2392.8 108.6" fill="none" stroke="#3b4453" stroke-width="0"/>
<circle cx="2392.2" cy="110.6" r="2.1" fill="none" stroke="#f4f4f4" stroke-width="1.4"/><circle cx="2400.8" cy="110.6" r="2.1" fill="none" stroke="#f4f4f4" stroke-width="1.4"/>
<path d="M2410.2 97.8h7l-3.5 4z" fill="#d9d9d9"/>
<path d="M2381.9 125H2391.4L2395 128.6V144.6H2381.9z" fill="#dcdcdc"/>
<path d="M2386 129.4H2396L2401.1 134.6V149.1H2386z" fill="#dcdcdc" stroke="#3b4453" stroke-width="0.9"/>
<path d="M2396 129.4L2401.1 134.6H2396z" fill="#f4f4f4"/>
<path d="M2410.2 133.8h7l-3.5 4z" fill="#d9d9d9"/>
<path d="M2452.8 92.8H2474V107.8H2501V129H2452.8z" fill="#dcdcdc"/>
<text x="2459.45" y="160.1" font-size="18.6" fill="#e6e6e6" textLength="36" lengthAdjust="spacingAndGlyphs">Base</text><path d="M2473.1 169.9h7l-3.5 4z" fill="#d9d9d9"/></g>
<g id="filetabs"><path d="M104.7 229H224.7L210 265H89z" fill="#3b4453"/>
<line x1="28.6" y1="236" x2="18" y2="259" stroke="#4a5263" stroke-width="1.4"/>
<text x="42.05" y="253.6" font-size="18.6" fill="#f0f0f0" textLength="36.3" lengthAdjust="spacingAndGlyphs">Start</text>
<text x="113.7" y="253.6" font-size="18.8" fill="#ffffff" textLength="67.6" lengthAdjust="spacingAndGlyphs" font-weight="bold">solidos*</text>
<path d="M195.4 242.6L206.4 253M206.4 242.6L195.4 253" fill="none" stroke="#a8adb8" stroke-width="2.6"/>
<path d="M238.2 247.4H256M247.1 238.6V256.2" fill="none" stroke="#e8e8e8" stroke-width="2.8"/>
<line x1="282.4" y1="236" x2="272" y2="259" stroke="#4a5263" stroke-width="1.4"/>
<rect x="4" y="265" width="2548.4" height="5.8" fill="#3b4453"/>
<rect x="4" y="265" width="38" height="9" fill="#3b4453"/></g>
<g id="viewport"><rect x="42" y="270.8" width="2510.4" height="1163" fill="#212830"/>
<rect x="5" y="278" width="33" height="1148.8" fill="#3b4453"/>
<text transform="translate(29.9 952.2) rotate(-90)" font-size="18.6" fill="#e6e6e6" textLength="202.2" lengthAdjust="spacingAndGlyphs">Layer Properties Manager</text>
<text x="46" y="295" font-size="18" fill="#e8e8e8" textLength="5.9" lengthAdjust="spacingAndGlyphs">[</text>
<text x="52.3" y="292.2" font-size="18" fill="#e8e8e8" textLength="11.9" lengthAdjust="spacingAndGlyphs">−</text>
<text x="65.7" y="295" font-size="18" fill="#e8e8e8" textLength="5.6" lengthAdjust="spacingAndGlyphs">]</text>
<text x="71.3" y="295" font-size="18" fill="#e8e8e8" textLength="172.4" lengthAdjust="spacingAndGlyphs">[Custom View][X-Ray]</text>
<rect x="2464.6" y="291.4" width="15.8" height="4.2" fill="#e0e0e0" stroke="#101318" stroke-width="1"/>
<rect x="2499.6" y="284.4" width="9.8" height="8.6" fill="none" stroke="#e0e0e0" stroke-width="2"/>
<rect x="2496" y="288.4" width="9.6" height="8.2" fill="#212830" stroke="#e0e0e0" stroke-width="2.6"/>
<path d="M2525.6 284.8L2537.4 296M2537.4 284.8L2525.6 296" fill="none" stroke="#101318" stroke-width="5"/>
<path d="M2525.6 284.8L2537.4 296M2537.4 284.8L2525.6 296" fill="none" stroke="#e8e8e8" stroke-width="3"/>
<polygon points="1424.5,394.5 1614.3,602.5 1492.3,830.3 1228,763.6 1186.9,494.4" fill="#126468" stroke="#ffffff" stroke-width="1" stroke-linejoin="round" shape-rendering="crispEdges"/>
<polygon points="1614.3,602.5 1681.5,657 1601.5,919.4 1484.5,1027 1492.3,830.3" fill="#12706f" stroke="#ffffff" stroke-width="1" stroke-linejoin="round" shape-rendering="crispEdges"/>
<polygon points="1228,763.6 1492.3,830.3 1484.5,1027 1215.5,1082.4 1057,919.8" fill="#116b6e" stroke="#ffffff" stroke-width="1" stroke-linejoin="round" shape-rendering="crispEdges"/>
<defs><linearGradient id="gz" x1="0" x2="1"><stop offset="0" stop-color="#3f5f9c"/><stop offset="0.35" stop-color="#314a78"/><stop offset="1" stop-color="#3d5a92"/></linearGradient><linearGradient id="gy" x1="0" x2="0" y1="0" y2="1"><stop offset="0" stop-color="#3f8a36"/><stop offset="0.55" stop-color="#7cc46a"/><stop offset="1" stop-color="#3f8236"/></linearGradient><linearGradient id="gx" x1="0" x2="0" y1="0" y2="1"><stop offset="0" stop-color="#a84e4e"/><stop offset="0.5" stop-color="#e88a8a"/><stop offset="1" stop-color="#a04646"/></linearGradient></defs>
<rect x="0" y="-3.6" width="61.16" height="7.2" rx="2" fill="url(#gy)" transform="translate(1060.9 916.6) rotate(-25.06)"/>
<rect x="0" y="-4" width="59.49" height="8" rx="2.4" fill="url(#gx)" transform="translate(1055.6 919.4) rotate(45.35)"/>
<rect x="1052.1" y="866" width="8.8" height="56.4" fill="url(#gz)" rx="3"/>
<path d="M1052.3 870.6Q1052.3 866.6 1056.5 865.2Q1060.7 866.6 1060.7 870.6Q1056.5 872.4 1052.3 870.6z" fill="#7aa8ea"/>
<path d="M1053 843.4H1071.6L1053.6 861.4H1071" fill="none" stroke="#1260f4" stroke-width="1.3"/>
<path d="M1113 866L1121.6 874.4L1130.8 866M1121.6 874.4V883.8" fill="none" stroke="#14b414" stroke-width="1.2"/>
<path d="M1093.1 938.1L1110.9 956.1M1110.9 939.1L1093.1 956.9" fill="none" stroke="#e23a3a" stroke-width="1.1"/>
<line x1="1829.2" y1="890.2" x2="1909.9" y2="971.6" stroke="#f07070" stroke-width="1"/>
<line x1="1817" y1="934.6" x2="1934.9" y2="880.4" stroke="#70f070" stroke-width="1.1"/>
<line x1="1855.5" y1="849" x2="1855.5" y2="950.8" stroke="#7a7af2" stroke-width="1.4"/>
<rect x="1851.6" y="912.8" width="7.8" height="7.6" fill="#212830" stroke="#ffffff" stroke-width="1.2"/>
<circle cx="1872.6" cy="900.1" r="5.8" fill="#f4f4f4" stroke="#15181e" stroke-width="1"/>
<path d="M1868 900.6H1877.2A4.6 3.4 0 0 1 1868 900.6z" fill="#101010"/><path fill-rule="evenodd" fill="#434a55" d="M2335.5 463a94 72 0 1 0 188 0a94 72 0 1 0 -188 0zM2355.5 458a74 53 0 1 1 148 0a74 53 0 1 1 -148 0z"/>
<text transform="translate(2495.6 422) rotate(28)" font-size="26" font-weight="bold" fill="#9a9ea6" text-anchor="middle" dominant-baseline="central">N</text>
<text transform="translate(2351.1 494) rotate(-58)" font-size="30" font-weight="bold" fill="#9a9ea6" text-anchor="middle" dominant-baseline="central">S</text>
<text transform="translate(2482.8 515.9) rotate(-33)" font-size="30" font-weight="bold" fill="#9a9ea6" text-anchor="middle" dominant-baseline="central">E</text>
<text transform="translate(2383 407) rotate(-33)" font-size="22" font-weight="bold" fill="#9a9ea6" text-anchor="middle" dominant-baseline="central">W</text>
<defs><radialGradient id="cg"><stop offset="0.55" stop-color="#3c424c" stop-opacity="0.9"/><stop offset="1" stop-color="#212830" stop-opacity="0"/></radialGradient></defs>
<ellipse cx="2428" cy="452" rx="62" ry="50" fill="url(#cg)"/>
<defs><linearGradient id="cr" x1="0" y1="0" x2="0" y2="1"><stop offset="0" stop-color="#b4b6b9"/><stop offset="1" stop-color="#a0a2a6"/></linearGradient><linearGradient id="cl" x1="0" y1="0" x2="0.3" y2="1"><stop offset="0" stop-color="#b6b8bb"/><stop offset="1" stop-color="#a4a6aa"/></linearGradient></defs>
<polygon points="2437.9,368.4 2481.6,408.4 2419.7,437.8 2377.3,393.9" fill="#b1b3b6" />
<polygon points="2377.3,393.9 2419.7,437.8 2419.7,488.5 2382.1,449.7" fill="url(#cl)" />
<polygon points="2419.7,437.8 2481.6,408.4 2477.9,457.7 2419.7,488.5" fill="url(#cr)" />
<path d="M2377.3 393.9L2419.7 437.8L2481.6 408.4M2419.7 437.8V488.5" fill="none" stroke="#5f646e" stroke-width="0.8" stroke-dasharray="7 2"/>
<polygon points="2410.4,428 2419.7,422.6 2430.4,432.6 2430.4,443.6 2419.7,448.4 2410.6,439.2" fill="#a9adbd" />
<text transform="matrix(0.74 0.68 -0.8 0.34 2429.4 399.6)" font-size="14" font-weight="bold" fill="#5a606c" text-anchor="middle" dominant-baseline="central" textLength="29" lengthAdjust="spacingAndGlyphs">TOP</text>
<text transform="matrix(0.69 0.72 0 1 2399.8 442.4)" font-size="12.4" font-weight="bold" fill="#5a606c" text-anchor="middle" dominant-baseline="central" textLength="47" lengthAdjust="spacingAndGlyphs">FRONT</text>
<text transform="matrix(0.9 -0.43 0 1 2450.2 447.6)" font-size="16.4" font-weight="bold" fill="#5a606c" text-anchor="middle" dominant-baseline="central" textLength="46" lengthAdjust="spacingAndGlyphs">RIGHT</text>
<rect x="2395.5" y="557.8" width="67.9" height="24.4" fill="#8e92a6" rx="4" stroke="#a4a8ba" stroke-width="1"/>
<text x="2401.3" y="575.6" font-size="14.8" fill="#5e6274" textLength="35.4" lengthAdjust="spacingAndGlyphs">WCS</text>
<path d="M2445.6 566.2H2456L2450.8 572.6z" fill="#9a9eb0" stroke="#b4b8c8" stroke-width="0.9"/><rect x="2503.1" y="616" width="46.1" height="311.4" fill="#5c6167" rx="4" stroke="#2a2f38" stroke-width="1"/>
<circle cx="2540" cy="623" r="4.6" fill="#666b72" stroke="#4d535b" stroke-width="1"/>
<path d="M2537.6 620.6L2542.4 625.4M2542.4 620.6L2537.6 625.4" fill="none" stroke="#4d535b" stroke-width="1"/>
<path d="M2526 640.8H2538.6Q2541.6 640.8 2541.6 644V657.4A15.6 15.6 0 1 1 2526 640.8z" fill="#62676e" stroke="#4d535b" stroke-width="1.6"/>
<circle cx="2526" cy="657.2" r="10.6" fill="none" stroke="#4d535b" stroke-width="1.6"/><circle cx="2526" cy="657.2" r="6" fill="#565b63"/>
<path d="M2522.6 685.2h8l-4 4.4z" fill="#4d535b"/>
<line x1="2506.4" y1="697.4" x2="2546" y2="697.4" stroke="#666b72" stroke-width="1"/>
<path d="M2512 722C2508 718 2510 716 2514 719L2517.6 723V709.6Q2519.4 706 2521.2 709.6V720V706.4Q2523.2 703 2525 706.4V720V707.6Q2527 704.4 2528.8 707.6V721V711.6Q2530.6 709 2532.4 711.6V726Q2532.4 736 2524 736Q2517 736 2512 722z" fill="#666b72" stroke="#4d535b" stroke-width="1.5"/>
<path d="M2509.4 747.6L2530 768.4M2530.4 747.6L2509.4 768.4" fill="none" stroke="#4d535b" stroke-width="1.8"/>
<path d="M2507.6 745.6h6l-6 6zM2532 745.6h-6l6 6zM2507.6 770.4h6l-6-6z" fill="#4d535b"/>
<circle cx="2532" cy="769.6" r="6.4" fill="#666b72" stroke="#4d535b" stroke-width="1.8"/><line x1="2536.8" y1="774.6" x2="2543" y2="780.4" stroke="#4d535b" stroke-width="3"/>
<path d="M2522.6 790.4h8l-4 4.4z" fill="#4d535b"/>
<ellipse cx="2525" cy="822.8" rx="16.4" ry="5.8" fill="none" stroke="#4d535b" stroke-width="1.8"/>
<path d="M2521.6 834.6V812H2517.6L2525 803.6L2532.4 812H2528.4V834.6z" fill="#666b72" stroke="#4d535b" stroke-width="1.5"/>
<path d="M2511.6 822.6l5.4 6.6v-8z" fill="#4d535b"/>
<path d="M2522.6 847.4h8l-4 4.4z" fill="#4d535b"/>
<line x1="2506.4" y1="859.4" x2="2546" y2="859.4" stroke="#666b72" stroke-width="1"/>
<rect x="2508.6" y="866.6" width="8.8" height="8.8" fill="#62676e" stroke="#4d535b" stroke-width="1.4"/>
<rect x="2520.4" y="866.6" width="8.8" height="8.8" fill="#62676e" stroke="#4d535b" stroke-width="1.4"/>
<rect x="2532.6" y="866.6" width="8.8" height="8.8" fill="#62676e" stroke="#4d535b" stroke-width="1.4"/>
<rect x="2508.6" y="880.4" width="23.8" height="19.2" fill="#62676e" stroke="#4d535b" stroke-width="1.6"/>
<path d="M2516 884.6L2527 890.2L2516 895.8z" fill="#4d535b"/>
<circle cx="2540" cy="918" r="4.6" fill="#666b72" stroke="#4d535b" stroke-width="1"/>
<path d="M2537.2 916.4H2542.8L2540 920.4z" fill="#4d535b"/></g>
<g id="cmdline"><rect x="558.4" y="1249.4" width="41.6" height="183.6" fill="#2b303d" rx="5"/>
<rect x="595.6" y="1250.1" width="1438.4" height="151.3" fill="#999a9c"/>
<rect x="595.6" y="1401.2" width="1438.4" height="2" fill="#202632"/>
<path d="M595.6 1403.2H2034V1429.2Q2034 1432.4 2030.8 1432.4H595.6z" fill="#bfc0c2"/>
<rect x="564.4" y="1256.4" width="2.4" height="2.4" fill="#c8ccd4"/>
<rect x="569" y="1256.4" width="2.4" height="2.4" fill="#c8ccd4"/>
<rect x="573.6" y="1256.4" width="2.4" height="2.4" fill="#c8ccd4"/>
<rect x="578.2" y="1256.4" width="2.4" height="2.4" fill="#c8ccd4"/>
<rect x="582.8" y="1256.4" width="2.4" height="2.4" fill="#c8ccd4"/>
<rect x="587.4" y="1256.4" width="2.4" height="2.4" fill="#c8ccd4"/>
<path d="M569.6 1278.2L582 1290.2M582 1278.2L569.6 1290.2" fill="none" stroke="#d2d2d2" stroke-width="2.8"/>
<line x1="567" y1="1328.6" x2="580" y2="1316" stroke="#d2d2d2" stroke-width="3.6" stroke-linecap="round"/>
<path d="M582.4 1308.8A6 6 0 1 0 587.6 1316.2L583.6 1316.8L581 1314L582.4 1308.8z" fill="#d2d2d2"/>
<text x='599' y='1277.7' font-family='"Liberation Mono", monospace' font-size='18.6' fill='#050505' textLength='87.44' lengthAdjust='spacingAndGlyphs' xml:space='preserve'>Command:</text>
<text x='599' y='1300.8' font-family='"Liberation Mono", monospace' font-size='18.6' fill='#050505' textLength='262.32' lengthAdjust='spacingAndGlyphs' xml:space='preserve'>Command: _.erase 1 found</text>
<text x='599' y='1323.8' font-family='"Liberation Mono", monospace' font-size='18.6' fill='#050505' textLength='87.44' lengthAdjust='spacingAndGlyphs' xml:space='preserve'>Command:</text>
<text x='599' y='1346.8' font-family='"Liberation Mono", monospace' font-size='18.6' fill='#050505' textLength='87.44' lengthAdjust='spacingAndGlyphs' xml:space='preserve'>Command:</text>
<text x='599' y='1369.9' font-family='"Liberation Mono", monospace' font-size='18.6' fill='#050505' textLength='87.44' lengthAdjust='spacingAndGlyphs' xml:space='preserve'>Command:</text>
<text x='599' y='1392.9' font-family='"Liberation Mono", monospace' font-size='18.6' fill='#050505' textLength='87.44' lengthAdjust='spacingAndGlyphs' xml:space='preserve'>Command:</text>
<rect x="602.8" y="1411" width="22.4" height="15.8" fill="#b4b5b7" stroke="#4e4e4e" stroke-width="1.2"/>
<rect x="602.8" y="1411" width="22.4" height="4" fill="#4e4e4e"/>
<rect x="604.6" y="1412" width="1.8" height="1.6" fill="#e0e0e0"/>
<path d="M605 1417.6L609 1420L605 1422.4" fill="none" stroke="#4e4e4e" stroke-width="1"/>
<line x1="609.6" y1="1423" x2="614.6" y2="1423" stroke="#4e4e4e" stroke-width="1"/>
<path d="M629.8 1415.9h10.8l-5.4 6z" fill="#505050"/>
<text x='650.6' y='1424' font-family='"Liberation Mono", monospace' font-size='18.6' font-style='italic' fill='#6c6c6c' textLength='153.02' lengthAdjust='spacingAndGlyphs' xml:space='preserve'>Type a command</text>
<path d="M2017.8 1420.4H2028.6L2023.2 1414.7z" fill="#4a4a4a"/></g>
<g id="layouttabs"><rect x="4" y="1433.8" width="2548.4" height="6.2" fill="#3b4453"/>
<rect x="4" y="1430.4" width="38" height="9.6" fill="#3b4453"/>
<path d="M32.4 1440H122.6L107.1 1476H17.5z" fill="#3b4453"/>
<text x="41.8" y="1466.2" font-size="18.8" fill="#ffffff" textLength="54.6" lengthAdjust="spacingAndGlyphs" font-weight="bold">Model</text>
<text x="132.65" y="1466.2" font-size="18.6" fill="#f0f0f0" textLength="18.5" lengthAdjust="spacingAndGlyphs">a3</text>
<line x1="175.6" y1="1446.6" x2="165.4" y2="1469.6" stroke="#4a5263" stroke-width="1.4"/>
<path d="M191 1458.4H208.4M199.7 1449.6V1467.2" fill="none" stroke="#e8e8e8" stroke-width="2.8"/>
<line x1="235.4" y1="1446.6" x2="225.2" y2="1469.6" stroke="#4a5263" stroke-width="1.4"/></g>
<g id="statusbar"><rect x="7" y="1485" width="1630" height="36" fill="#3b4453"/>
<rect x="1643.8" y="1486" width="72.3" height="36" fill="#3b4453"/>
<rect x="1721.9" y="1486" width="96.2" height="36" fill="#3b4453"/>
<rect x="1824" y="1486" width="36.3" height="36" fill="#3b4453"/>
<rect x="1862" y="1486" width="156.4" height="36" fill="#3b4453"/>
<rect x="2020.7" y="1486" width="95.5" height="36" fill="#3b4453"/>
<rect x="2122.4" y="1486" width="157.5" height="36" fill="#3b4453"/>
<rect x="2286.1" y="1486" width="59.9" height="36" fill="#3b4453"/>
<rect x="2348" y="1486" width="35.9" height="36" fill="#3b4453"/>
<rect x="2390.1" y="1486" width="35.8" height="36" fill="#3b4453"/>
<rect x="2430.1" y="1486" width="43.7" height="36" fill="#3b4453"/>
<rect x="2478.1" y="1486" width="71.9" height="36" fill="#3b4453"/>
<rect x="2020.7" y="1486.9" width="34.3" height="34.1" fill="#5f8fc5"/><rect x="2056.9" y="1486.9" width="34.2" height="34.1" fill="#5f8fc5"/><rect x="2123" y="1486.9" width="34.2" height="34.1" fill="#5f8fc5"/>
<text x="1649.25" y="1510.6" font-size="18.6" fill="#e6e6e6" textLength="62" lengthAdjust="spacingAndGlyphs" stroke="#e6e6e6" stroke-width="0.45">MODEL</text>
<line x1="1734" y1="1492.2" x2="1734" y2="1515.4" stroke="#dcdcdc" stroke-width="1.3"/><line x1="1728.3" y1="1498" x2="1751.5" y2="1498" stroke="#dcdcdc" stroke-width="1.3"/>
<line x1="1739.8" y1="1492.2" x2="1739.8" y2="1515.4" stroke="#dcdcdc" stroke-width="1.3"/><line x1="1728.3" y1="1503.8" x2="1751.5" y2="1503.8" stroke="#dcdcdc" stroke-width="1.3"/>
<line x1="1745.6" y1="1492.2" x2="1745.6" y2="1515.4" stroke="#dcdcdc" stroke-width="1.3"/><line x1="1728.3" y1="1509.6" x2="1751.5" y2="1509.6" stroke="#dcdcdc" stroke-width="1.3"/>
<rect x="1767" y="1495" width="2.8" height="2.8" fill="#dcdcdc"/>
<rect x="1774.2" y="1495" width="2.8" height="2.8" fill="#dcdcdc"/>
<rect x="1781.4" y="1495" width="2.8" height="2.8" fill="#dcdcdc"/>
<rect x="1767" y="1502.2" width="2.8" height="2.8" fill="#dcdcdc"/>
<rect x="1774.2" y="1502.2" width="2.8" height="2.8" fill="#dcdcdc"/>
<rect x="1781.4" y="1502.2" width="2.8" height="2.8" fill="#dcdcdc"/>
<rect x="1767" y="1509.4" width="2.8" height="2.8" fill="#dcdcdc"/>
<rect x="1774.2" y="1509.4" width="2.8" height="2.8" fill="#dcdcdc"/>
<rect x="1781.4" y="1509.4" width="2.8" height="2.8" fill="#dcdcdc"/>
<path d="M1800.2 1500.7h11.6l-5.8 6.2z" fill="#d9d9d9"/>
<path d="M1830.4 1500.6H1841M1835.7 1495.2V1506" fill="none" stroke="#dcdcdc" stroke-width="1.3"/>
<rect x="1839.4" y="1507" width="14.8" height="6.2" fill="#dcdcdc"/><rect x="1841" y="1508.4" width="1.6" height="3.4" fill="#3b4453"/>
<path d="M1868.8 1492.6V1515.2H1892" fill="none" stroke="#dcdcdc" stroke-width="1.4"/><path d="M1868.8 1508.4H1875.6V1515.2" fill="none" stroke="#dcdcdc" stroke-width="1.2"/>
<circle cx="1913.6" cy="1504.4" r="9.2" fill="none" stroke="#dcdcdc" stroke-width="1.3"/>
<path d="M1924 1494.2L1913.6 1504.4H1928" fill="none" stroke="#dcdcdc" stroke-width="1.2"/>
<path d="M1939.9 1500.7h11.6l-5.8 6.2z" fill="#d9d9d9"/>
<line x1="1976.2" y1="1492.4" x2="1976.2" y2="1514.4" stroke="#5fdc6a" stroke-width="1.2"/><line x1="1967" y1="1494" x2="1985" y2="1511.8" stroke="#f06a6a" stroke-width="1.2"/>
<rect x="1974.4" y="1501.4" width="3.6" height="3.6" fill="#3b4453" stroke="#f4f4f4" stroke-width="1"/>
<path d="M2000.2 1500.7h11.6l-5.8 6.2z" fill="#d9d9d9"/>
<path d="M2027 1512.4L2044 1495.4M2027 1512.4H2049.6" fill="none" stroke="#f4f4f4" stroke-width="1.4"/>
<rect x="2033.6" y="1502" width="4" height="4" fill="#f4f4f4"/>
<rect x="2066.2" y="1495.6" width="19.2" height="19.4" fill="none" stroke="#f4f4f4" stroke-width="1.4"/>
<rect x="2062.6" y="1492.4" width="6" height="5.8" fill="#5f8fc5" stroke="#f4f4f4" stroke-width="1.1"/>
<path d="M2098.2 1500.7h11.6l-5.8 6.2z" fill="#d9d9d9"/>
<polygon points="2138.4,1492.2 2142.1,1502.6 2141,1505 2144,1507.4 2149,1515.8 2141,1512.4 2138.4,1510.1 2135.8,1512.4 2127.8,1515.8 2132.8,1507.4 2135.8,1505 2134.7,1502.6" fill="#ffffff"/><circle cx="2147.5" cy="1497.5" r="3.8" fill="none" stroke="#ffffff" stroke-width="1.3"/>
<polygon points="2174.4,1492.2 2178.1,1502.6 2177,1505 2180,1507.4 2185,1515.8 2177,1512.4 2174.4,1510.1 2171.8,1512.4 2163.8,1515.8 2168.8,1507.4 2171.8,1505 2170.7,1502.6" fill="#dcdcdc"/><path d="M2185.6 1492.2L2179.4 1498.2H2182.6L2180 1503.7L2186.9 1497.6H2183.6z" fill="#dcdcdc"/>
<polygon points="2211.5,1492.2 2215.2,1502.6 2214.1,1505 2217.1,1507.4 2222.1,1515.8 2214.1,1512.4 2211.5,1510.1 2208.9,1512.4 2200.9,1515.8 2205.9,1507.4 2208.9,1505 2207.8,1502.6" fill="#dcdcdc"/>
<text x="2238.05" y="1510.6" font-size="18.6" fill="#e6e6e6" textLength="18.1" lengthAdjust="spacingAndGlyphs" stroke="#e6e6e6" stroke-width="0.5">1:1</text>
<path d="M2262.2 1500.7h11.6l-5.8 6.2z" fill="#d9d9d9"/>
<rect x="-2.6" y="-12" width="5.2" height="6" fill="#dcdcdc" transform="translate(2304.1 1504) rotate(0)"/>
<rect x="-2.6" y="-12" width="5.2" height="6" fill="#dcdcdc" transform="translate(2304.1 1504) rotate(45)"/>
<rect x="-2.6" y="-12" width="5.2" height="6" fill="#dcdcdc" transform="translate(2304.1 1504) rotate(90)"/>
<rect x="-2.6" y="-12" width="5.2" height="6" fill="#dcdcdc" transform="translate(2304.1 1504) rotate(135)"/>
<rect x="-2.6" y="-12" width="5.2" height="6" fill="#dcdcdc" transform="translate(2304.1 1504) rotate(180)"/>
<rect x="-2.6" y="-12" width="5.2" height="6" fill="#dcdcdc" transform="translate(2304.1 1504) rotate(225)"/>
<rect x="-2.6" y="-12" width="5.2" height="6" fill="#dcdcdc" transform="translate(2304.1 1504) rotate(270)"/>
<rect x="-2.6" y="-12" width="5.2" height="6" fill="#dcdcdc" transform="translate(2304.1 1504) rotate(315)"/>
<circle cx="2304.1" cy="1504" r="6.7" fill="none" stroke="#dcdcdc" stroke-width="5"/>
<path d="M2328.3 1500.7h11.6l-5.8 6.2z" fill="#d9d9d9"/>
<path d="M2354 1503.4H2377M2365.5 1492V1515" fill="none" stroke="#dcdcdc" stroke-width="2.8"/>
<rect x="2396.6" y="1493.2" width="8.8" height="8.4" fill="none" stroke="#dcdcdc" stroke-width="1.2"/><circle cx="2414.6" cy="1503" r="4.8" fill="none" stroke="#dcdcdc" stroke-width="1.2"/><path d="M2400 1515.4L2405.4 1506.4L2410.8 1515.4z" fill="none" stroke="#dcdcdc" stroke-width="1.2"/>
<path d="M2434.4 1486.4H2455L2464.4 1494V1513H2434.4z" fill="#3d6cb0"/>
<path d="M2455 1486.4L2464.4 1494H2455z" fill="#6a9be0"/>
<line x1="2440" y1="1486.4" x2="2440" y2="1510" stroke="#cfe4ff" stroke-width="1.6"/><line x1="2434.4" y1="1494" x2="2452" y2="1494" stroke="#cfe4ff" stroke-width="1.2"/><circle cx="2440" cy="1494" r="2.4" fill="#3d6cb0" stroke="#cfe4ff" stroke-width="1.4"/>
<path d="M2434.4 1508H2447L2451 1512.6L2447 1517.4H2434.4z" fill="#f0b428"/>
<path d="M2448.4 1511.8L2455 1518.6L2469 1504.6" fill="none" stroke="#3cb454" stroke-width="4"/>
<rect x="2484.4" y="1495.4" width="23.2" height="16.2" fill="none" stroke="#dcdcdc" stroke-width="1.3"/>
<path d="M2488.4 1508L2493.4 1503.4M2503.6 1499L2498.6 1503.6" fill="none" stroke="#dcdcdc" stroke-width="1.2"/><path d="M2487.4 1509h4.6l-4.6-4.6zM2504.6 1498h-4.6l4.6 4.6z" fill="#dcdcdc"/>
<rect x="2519.6" y="1493.1" width="24.6" height="3" fill="#dcdcdc"/>
<rect x="2519.6" y="1501.9" width="24.6" height="3" fill="#dcdcdc"/>
<rect x="2519.6" y="1510.7" width="24.6" height="3" fill="#dcdcdc"/></g>
</svg>
</body></html>
